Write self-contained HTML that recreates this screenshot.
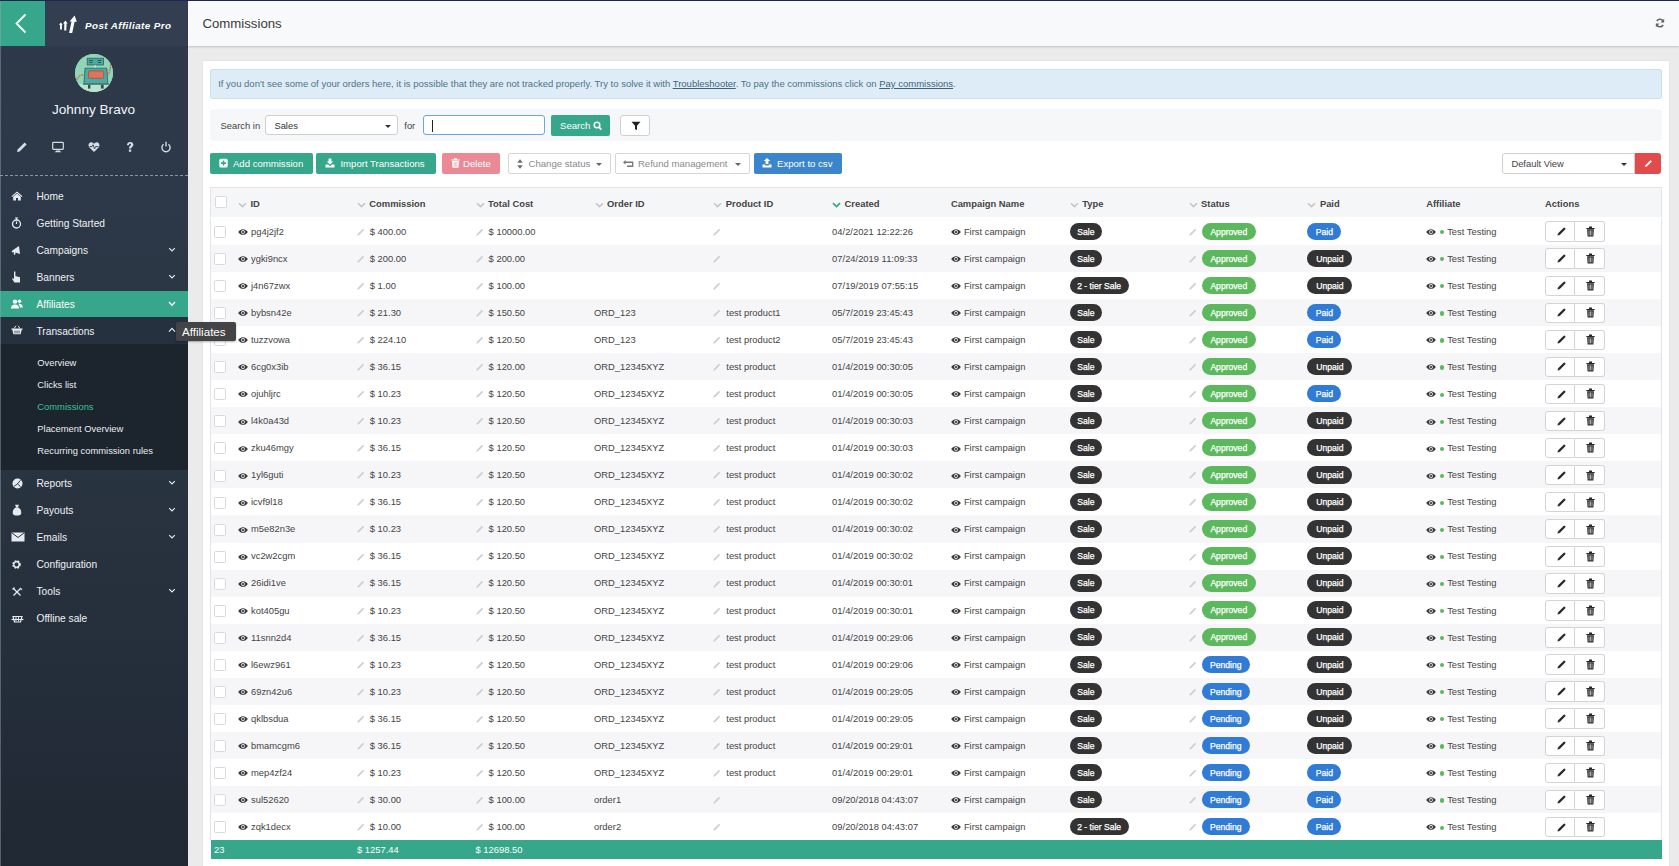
<!DOCTYPE html>
<html><head><meta charset="utf-8"><title>Commissions</title>
<style>
*{box-sizing:border-box}
html,body{margin:0;padding:0}
body{width:1679px;height:866px;overflow:hidden;position:relative;background:#ebebec;font-family:"Liberation Sans",sans-serif;color:#333}
.abs{position:absolute}
#topline{position:absolute;left:0;top:0;width:1679px;height:1px;background:#1f2452;z-index:5}
/* sidebar */
#side{position:absolute;left:0;top:1px;width:188px;height:865px;background:linear-gradient(180deg,#2e3a4b 0%,#2b3644 45%,#26303c 70%,#1f2833 100%);overflow:hidden}
#logo{position:absolute;left:0;top:0;width:188px;height:45px;background:#333f50}
#back{position:absolute;left:0;top:0;width:45px;height:45px;background:#36a78a}
#back svg{position:absolute;left:14px;top:12px}
#logotext{position:absolute;left:85px;top:19px;font-size:9.8px;letter-spacing:0.45px;font-weight:bold;font-style:italic;color:#fff;white-space:nowrap}
#avatar{position:absolute;left:75px;top:53px;width:38px;height:38px;border-radius:50%;background:#8ed6b6;overflow:hidden}
#uname{position:absolute;left:0;width:187px;top:100.7px;text-align:center;font-size:13.6px;color:#f1f4f7;white-space:nowrap}
.sico{position:absolute;top:139.5px}
#dash{position:absolute;left:0;top:174px;width:188px;height:0;border-top:1px dashed #8a94a0}
.nav{position:absolute;left:0;width:188px;height:27px;font-size:10.2px;color:#eef1f4;white-space:nowrap}
.nav .lbl{position:absolute;left:36.5px;top:7.5px}
.nav .ico{position:absolute;left:11px;top:8px}
.nav .car{position:absolute;left:168px;top:10px}
.nav.active{background:#36a78a;color:#fff}
.nav.open{background:#263140}
#sub{position:absolute;left:0;top:343px;width:188px;height:126px;background:#1c242e}
.si{position:absolute;left:37.3px;margin-top:-1px;font-size:9.4px;color:#e9edf1;white-space:nowrap}
.si.cur{color:#3fc09d}
#tip{position:absolute;left:176px;top:321.5px;width:60px;height:19.5px;background:#444446;border-radius:2px;color:#fff;font-size:11.6px;line-height:20px;padding-left:6px;white-space:nowrap;box-shadow:0 1px 2px rgba(0,0,0,.3);z-index:10}
/* header */
#hdr{position:absolute;left:188px;top:1px;width:1491px;height:45px;background:#f8f9fb;box-shadow:0 1px 2px rgba(0,0,0,.18)}
#title{position:absolute;left:14.5px;top:14.6px;font-size:13.2px;color:#3a3a3a;white-space:nowrap}
#refresh{position:absolute;left:1467px;top:16.6px}
/* panel */
#panel{position:absolute;left:203px;top:61px;width:1466px;height:820px;background:#fff;box-shadow:0 0 1px rgba(0,0,0,.12)}
#info{position:absolute;left:7px;top:8px;width:1452px;height:30px;background:#ddecf7;border:1px solid #c9e0ee;border-radius:2px;font-size:9.5px;color:#4d7388;white-space:nowrap;padding:7.8px 0 0 7.2px}
#info u{color:#3f6478}
#search{position:absolute;left:7px;top:48px;width:1452px;height:32px;background:#f6f7f9;border-radius:4px}
.lbl9{position:absolute;font-size:9.4px;color:#444;white-space:nowrap}
.sel{position:absolute;background:#fff;border:1px solid #cfcfcf;border-radius:3px}
.caret{position:absolute;width:0;height:0;border-left:3px solid transparent;border-right:3px solid transparent;border-top:3px solid #333}
.btn{position:absolute;height:21px;border-radius:2px;font-size:9.6px;white-space:nowrap;color:#fff}
.btn .tx{position:absolute;top:4.6px}
.btn.wb .tx{top:3.8px}
.btn svg{position:absolute}
.g{background:#36a78a}
.wb{background:#fff;border:1px solid #d6d6d6;color:#8a8a8a}
/* table */
#tbl{position:absolute;left:7px;top:126px;width:1452px;height:700px;border:1px solid #e4e4e6;border-bottom:none}
.thead{position:absolute;left:210px;top:187.4px;width:1452px;height:30px;background:#f5f6f8;border-top:1px solid #e4e4e6;border-left:1px solid #e4e4e6;border-right:1px solid #e4e4e6}
.cb{position:absolute;width:12px;height:12px;border:1px solid #d9d9d9;border-radius:1.5px;background:#fff}
.hchev{position:absolute;top:201.5px}.hchev svg{display:block}
.th{position:absolute;top:198px;font-size:9.4px;font-weight:bold;color:#444;white-space:nowrap}
.tr{position:absolute;left:210px;width:1452px;height:27.07px;background:#fff;border-left:1px solid #e4e4e6;border-right:1px solid #e4e4e6}
.tr.odd{background:#f6f6f8}
.td{position:absolute;top:0;height:27px;font-size:9.4px;color:#444;white-space:nowrap}
.td>span{position:absolute;top:7.9px;white-space:nowrap}
.td .t{left:13px}
.td .t2{left:21px}
.td .eye{position:absolute;left:-0.3px;top:11.3px}
.td .pen{position:absolute;left:0;top:10px}
.td .dot{position:absolute;left:13.4px;top:12.4px;width:4.2px;height:4.2px;border-radius:50%;background:#5cb85c}
.badge{position:absolute;top:4.8px!important;height:17.4px;line-height:18.6px;border-radius:9px;padding:0;text-align:center;color:#fff;font-size:8.6px;font-weight:normal;-webkit-text-stroke:0.25px #fff;overflow:hidden}
.badge.bs{left:13.2px}
.dark{background:#333}
.green{background:#5cb85c}
.blue{background:#2f7bd5}
.blue2{background:#2f7bd5}
.acts{position:absolute;top:3.6px;width:60.2px;height:20.4px}
.ab{position:absolute;top:0;width:30.1px;height:20.4px;border:1px solid #d4d4d4;background:#fff}
.ab:first-child{left:0;border-radius:3px 0 0 3px}
.ab:last-child{left:30px;border-radius:0 3px 3px 0;border-left:none}
.ab svg{position:absolute;left:10.3px;top:4.8px}
.ab:last-child svg{left:10.6px;top:3.6px}
#foot{position:absolute;left:210.5px;top:840px;width:1451px;height:19px;background:#36a78a;color:#fff;font-size:9.4px;white-space:nowrap}
#foot span{position:absolute;top:3.5px}
</style></head>
<body>
<div id="topline"></div>

<div id="side">
  <div id="logo"></div>
  <div id="back"><svg width="14" height="21" viewBox="0 0 14 21"><path d="M11.5 1.5L2.5 10.5L11.5 19.5" stroke="#fff" stroke-width="1.8" fill="none"/></svg></div>
  <svg class="abs" style="left:58px;top:13.2px" width="20" height="20" viewBox="0 0 20 20"><path d="M0.9 10.8L2.9 8.6L4.7 10.8H3.9V15.4H2V10.8Z M5.1 9.4L7.4 6.6L9.6 9.4H8.6L8.3 16.6H6.2L6.3 9.4Z M11.1 18.9L13.5 7.6H11.6L16.6 1.4L18.8 7.8H16.6L14.2 19.1Z" fill="#fff"/></svg>
  <div id="logotext">Post Affiliate Pro</div>
  <div id="avatar">
    <svg width="38" height="38" viewBox="0 0 38 38">
      <rect x="0" y="0" width="38" height="38" fill="#8fd5b6"/>
      <rect x="0" y="30" width="38" height="8" fill="#b9e3cf"/>
      <rect x="12.2" y="4.2" width="16.4" height="6.8" fill="#4aaaa4" stroke="#2f5050" stroke-width="0.7"/>
      <path d="M14 6.5H18M22.5 6.5H26.5M14.5 8.5H17.5M23 8.5H26" stroke="#2c4848" stroke-width="0.9"/>
      <rect x="19.6" y="11" width="1" height="3" fill="#eee"/>
      <path d="M10 14.2H31.8L32.8 29.8H8.9Z" fill="#4aaaa4" stroke="#2f5050" stroke-width="0.7"/>
      <rect x="13.5" y="16.9" width="15.2" height="7.4" rx="1" fill="#e47258" stroke="#8a3a2a" stroke-width="0.5"/>
      <rect x="8" y="29.4" width="26" height="1.4" fill="#3d7f7a"/>
      <rect x="13" y="30.8" width="2.4" height="3.8" fill="#4a4a42"/><rect x="25.9" y="30.8" width="2.8" height="3.8" fill="#4a4a42"/>
      <path d="M1.5 26.5Q4 20 9.5 21M32.5 21Q36 17 35.5 9" stroke="#c8643c" stroke-width="1.3" fill="none" stroke-dasharray="1.6 0.8"/>
    </svg>
  </div>
  <div id="uname">Johnny Bravo</div>
  <!-- user icons -->
  <svg class="sico" style="left:16px" width="12" height="12" viewBox="0 0 12 12"><path d="M1 11L1.6 8.4L8.6 1.4L10.6 3.4L3.6 10.4Z" fill="#d6dce3"/></svg>
  <svg class="sico" style="left:52px" width="12" height="12" viewBox="0 0 12 12"><rect x="0.7" y="1.3" width="10.6" height="7" rx="0.8" stroke="#d6dce3" stroke-width="1.2" fill="none"/><path d="M4 9.6H8V10.6H9.2V11.3H2.8V10.6H4Z" fill="#d6dce3"/></svg>
  <svg class="sico" style="left:88px" width="12" height="12" viewBox="0 0 12 12"><path d="M6 11L1.2 6.2C-0.2 4.6 0.6 1.3 3.2 1.3C4.6 1.3 5.4 2.2 6 3C6.6 2.2 7.4 1.3 8.8 1.3C11.4 1.3 12.2 4.6 10.8 6.2Z" fill="#d6dce3"/><path d="M1.5 5.6H4L5 3.8L6.6 7.8L7.6 5.6H10.5" stroke="#2e3a4a" stroke-width="0.9" fill="none"/></svg>
  <svg class="sico" style="left:124px" width="12" height="12" viewBox="0 0 12 12"><path d="M2.9 4.2C2.9 2.2 4.3 0.9 6.1 0.9C8.1 0.9 9.4 2 9.4 3.7C9.4 5.7 7.2 5.9 7.2 7.4H4.9C4.9 5.1 7 4.8 7 3.8C7 3.2 6.6 2.8 6 2.8C5.3 2.8 5 3.4 5 4.2Z M4.9 8.4H7.2V10.8H4.9Z" fill="#d6dce3"/></svg>
  <svg class="sico" style="left:160px" width="12" height="12" viewBox="0 0 12 12"><path d="M3.6 3.3A4.1 4.1 0 1 0 8.4 3.3" stroke="#d6dce3" stroke-width="1.4" fill="none"/><path d="M6 0.8V5.6" stroke="#d6dce3" stroke-width="1.4"/></svg>
  <div id="dash"></div>

  <!-- nav -->
  <div class="nav" style="top:182px"><svg class="ico" width="12" height="10" viewBox="0 0 12 10"><path d="M6 0.5L11.5 5.2L10.8 6L6 2L1.2 6L0.5 5.2Z M2.2 5.8L6 2.8L9.8 5.8V9.5H7V7H5V9.5H2.2Z" fill="#e6eaee"/></svg><span class="lbl">Home</span></div>
  <div class="nav" style="top:209px"><svg class="ico" width="11" height="12" viewBox="0 0 11 12" style="top:7px"><circle cx="5.5" cy="7" r="4" stroke="#e6eaee" stroke-width="1.3" fill="none"/><path d="M4 1H7M5.5 1V3M5.5 7V4.6" stroke="#e6eaee" stroke-width="1.2"/></svg><span class="lbl">Getting Started</span></div>
  <div class="nav" style="top:236px"><svg class="ico" width="12" height="11" viewBox="0 0 12 11"><path d="M0.5 6.5L2 5L8 1L9 9L4.5 7.6L4.2 9.8L2.7 9.5L2.8 7L1.5 7.5Z" fill="#e6eaee"/></svg><span class="lbl">Campaigns</span><svg class="car" width="8" height="6" viewBox="0 0 8 6"><path d="M1.2 1.2L4 4L6.8 1.2" stroke="#e6eaee" stroke-width="1.2" fill="none"/></svg></div>
  <div class="nav" style="top:263px"><svg class="ico" width="11" height="12" viewBox="0 0 11 12" style="top:7px"><path d="M3 0.5H4.4V5L9 6.2V11.5H3.4L1 7.8L2 7.2L3 8.2Z" fill="#e6eaee"/></svg><span class="lbl">Banners</span><svg class="car" width="8" height="6" viewBox="0 0 8 6"><path d="M1.2 1.2L4 4L6.8 1.2" stroke="#e6eaee" stroke-width="1.2" fill="none"/></svg></div>
  <div class="nav active" style="top:290px;height:26.5px"><svg class="ico" width="12" height="10" viewBox="0 0 12 10"><circle cx="4" cy="2.6" r="2.2" fill="#fff"/><path d="M0 9.5C0 6.8 1.6 5.5 4 5.5S8 6.8 8 9.5Z" fill="#fff"/><circle cx="8.5" cy="2.2" r="1.8" fill="#fff"/><path d="M8.3 4.8C10.3 4.8 11.8 6 11.8 8.5H8.8C8.8 7 8.4 5.8 7.4 5Z" fill="#fff"/></svg><span class="lbl">Affiliates</span><svg class="car" width="8" height="6" viewBox="0 0 8 6"><path d="M1 1L4 4.2L7 1" stroke="#fff" stroke-width="1.3" fill="none"/></svg></div>
  <div class="nav open" style="top:316px"><svg class="ico" width="12" height="10" viewBox="0 0 12 10"><path d="M0.5 3.5H11.5V4.7H0.5Z M1.3 4.7H10.7L9.6 9.3H2.4Z" fill="#e6eaee"/><path d="M3 3.5L5 0.8M9 3.5L7 0.8" stroke="#e6eaee" stroke-width="1"/><path d="M4 5.6V8.4M6 5.6V8.4M8 5.6V8.4" stroke="#263140" stroke-width="0.8"/></svg><span class="lbl" style="top:8.5px">Transactions</span><svg class="car" width="8" height="6" viewBox="0 0 8 6"><path d="M1 4.6L4 1.4L7 4.6" stroke="#e6eaee" stroke-width="1.2" fill="none"/></svg></div>
  <div id="sub">
    <div class="si" style="top:14px">Overview</div>
    <div class="si" style="top:36px">Clicks list</div>
    <div class="si cur" style="top:58px">Commissions</div>
    <div class="si" style="top:80px">Placement Overview</div>
    <div class="si" style="top:102px">Recurring commission rules</div>
  </div>
  <div class="nav" style="top:469.4px"><svg class="ico" width="12" height="12" viewBox="0 0 12 12" style="top:7.5px;left:12px"><circle cx="5.5" cy="5.5" r="5" fill="#e6eaee"/><path d="M5.5 6L8.5 2.2M5.5 6L2 8.2M5.5 6L8.6 8.6" stroke="#29343f" stroke-width="0.9"/></svg><span class="lbl">Reports</span><svg class="car" width="8" height="6" viewBox="0 0 8 6"><path d="M1.2 1.2L4 4L6.8 1.2" stroke="#e6eaee" stroke-width="1.2" fill="none"/></svg></div>
  <div class="nav" style="top:496.4px"><svg class="ico" width="12" height="12" viewBox="0 0 12 12" style="top:7px"><path d="M4 0.8H8L7 3H5Z M5 3.2H7C9.5 4.5 10.5 7 10.2 9.5C10 11 8.5 11.5 6 11.5S2 11 1.8 9.5C1.5 7 2.5 4.5 5 3.2Z" fill="#e6eaee"/></svg><span class="lbl">Payouts</span><svg class="car" width="8" height="6" viewBox="0 0 8 6"><path d="M1.2 1.2L4 4L6.8 1.2" stroke="#e6eaee" stroke-width="1.2" fill="none"/></svg></div>
  <div class="nav" style="top:523.4px"><svg class="ico" width="14" height="10" viewBox="0 0 14 10"><path d="M0.5 0.5H13.5V9.5H0.5Z" fill="#e6eaee"/><path d="M0.8 0.8L7 5.5L13.2 0.8" stroke="#26313c" stroke-width="1" fill="none"/></svg><span class="lbl">Emails</span><svg class="car" width="8" height="6" viewBox="0 0 8 6"><path d="M1.2 1.2L4 4L6.8 1.2" stroke="#e6eaee" stroke-width="1.2" fill="none"/></svg></div>
  <div class="nav" style="top:550.4px"><svg class="ico" width="11" height="11" viewBox="0 0 11 11" style="top:8px"><circle cx="5.5" cy="5.5" r="3.2" stroke="#e6eaee" stroke-width="2.2" fill="none" stroke-dasharray="1.6 1"/><circle cx="5.5" cy="5.5" r="2.8" stroke="#e6eaee" stroke-width="1.2" fill="none"/></svg><span class="lbl">Configuration</span></div>
  <div class="nav" style="top:577.4px"><svg class="ico" width="11" height="11" viewBox="0 0 11 11" style="top:8.5px;left:12px"><path d="M1.5 1.5L8.5 8.5M8.5 1.5L1.5 8.5" stroke="#e6eaee" stroke-width="1.3"/><path d="M0.5 2.5L2.5 0.5M8 0.8L10 2.8" stroke="#e6eaee" stroke-width="1.2"/></svg><span class="lbl">Tools</span><svg class="car" width="8" height="6" viewBox="0 0 8 6"><path d="M1.2 1.2L4 4L6.8 1.2" stroke="#e6eaee" stroke-width="1.2" fill="none"/></svg></div>
  <div class="nav" style="top:604.4px"><svg class="ico" width="13" height="11" viewBox="0 0 13 11" style="top:8.5px"><path d="M2 2.5L3.5 8H9.5L11 2.5Z" stroke="#e6eaee" stroke-width="1.2" fill="none"/><path d="M0.5 5.5H12.5" stroke="#e6eaee" stroke-width="1.1"/><path d="M5 3V7.5M7.5 3V7.5" stroke="#e6eaee" stroke-width="0.9"/></svg><span class="lbl">Offline sale</span></div>
</div>
<div class="abs" style="left:0;top:1px;width:1px;height:865px;background:rgba(150,165,180,0.45);z-index:6"></div>
<div id="tip">Affiliates</div>

<div id="hdr">
  <div id="title">Commissions</div>
  <svg id="refresh" width="10" height="10" viewBox="0 0 12 12"><path d="M10.2 4.6A4.4 4.4 0 0 0 2.2 3.6M1.8 7.4A4.4 4.4 0 0 0 9.8 8.4" stroke="#666" stroke-width="1.8" fill="none"/><path d="M11 1V5.4H6.6Z M1 11V6.6H5.4Z" fill="#666"/></svg>
</div>

<div id="panel">
  <div id="info">If you don't see some of your orders here, it is possible that they are not tracked properly. Try to solve it with <u>Troubleshooter</u>. To pay the commissions click on <u>Pay commissions</u>.</div>
  <div id="search"></div>
</div>

<!-- search controls (absolute page coords) -->
<div class="lbl9" style="left:220.5px;top:120px">Search in</div>
<div class="sel" style="left:265.4px;top:115.3px;width:132.2px;height:20px"><span class="lbl9" style="left:8px;top:3.3px;color:#333">Sales</span><div class="caret" style="left:119px;top:8.5px"></div></div>
<div class="lbl9" style="left:404.3px;top:120px">for</div>
<div class="sel" style="left:423px;top:115.3px;width:121.5px;height:20px;border-color:#6da6db"><div class="abs" style="left:8px;top:4px;width:1px;height:12px;background:#222"></div></div>
<div class="btn g" style="left:551px;top:115.3px;width:59px;height:20.5px"><span class="tx" style="left:9px">Search</span><svg style="left:42px;top:5.5px" width="9" height="10" viewBox="0 0 9 10"><circle cx="4" cy="4" r="2.8" stroke="#fff" stroke-width="1.5" fill="none"/><path d="M6 6.2L8.3 8.6" stroke="#fff" stroke-width="1.7"/></svg></div>
<div class="sel" style="left:620px;top:114.5px;width:30.4px;height:21px;border-color:#cfcfcf"><svg class="abs" style="left:10px;top:5.5px" width="10" height="10" viewBox="0 0 10 10"><path d="M0.5 0.8H9.5L6 4.8V9.2L4 8V4.8Z" fill="#222"/></svg></div>

<div class="btn g" style="left:210px;top:153.1px;width:102.9px;height:20.8px"><svg style="left:9px;top:5px" width="9" height="10" viewBox="0 0 9 10"><rect x="0.3" y="0.8" width="8.4" height="8.6" rx="1.5" fill="#fff"/><path d="M4.5 2.6V7.6M2 5.1H7" stroke="#36a78a" stroke-width="1.6"/></svg><span class="tx" style="left:22.9px">Add commission</span></div>
<div class="btn g" style="left:316px;top:153.1px;width:119.7px;height:20.8px"><svg style="left:9px;top:4.5px" width="10" height="10" viewBox="0 0 10 10"><path d="M3.6 0.5H6.4V3.5H8.3L5 6.5L1.7 3.5H3.6Z" fill="#fff"/><path d="M0.5 6.5H3.2L5 8.2L6.8 6.5H9.5V9.6H0.5Z" fill="#fff"/></svg><span class="tx" style="left:24.4px">Import Transactions</span></div>
<div class="btn" style="left:442px;top:153.1px;width:57.6px;height:20.8px;background:#eb8994"><svg style="left:8.5px;top:5px" width="9" height="10" viewBox="0 0 9 10"><path d="M0.3 1.4H8.7V2.6H0.3Z M3 0.3H6V1.4H3Z M1 2.9H8L7.5 9.7H1.5Z" fill="#fff"/><path d="M3.2 4V8.6M4.5 4V8.6M5.8 4V8.6" stroke="#eb8994" stroke-width="0.5"/></svg><span class="tx" style="left:21px">Delete</span></div>
<div class="btn wb" style="left:508px;top:153.1px;width:102.5px;height:20.8px"><svg style="left:8px;top:4.5px" width="6" height="10" viewBox="0 0 6 10"><path d="M3 0.3L5.8 3.8H0.2Z M3 9.7L5.8 6.2H0.2Z" fill="#6a6a6a"/></svg><span class="tx" style="left:19.5px">Change status</span><div class="caret" style="left:87px;top:8.5px;border-top-color:#666"></div></div>
<div class="btn wb" style="left:615.2px;top:153.1px;width:134.4px;height:20.8px"><svg style="left:7px;top:6px" width="11" height="8" viewBox="0 0 11 8"><path d="M9.5 1.5H2.5V0L0 2.2L2.5 4.4V2.9H9V5.6H4V7H10.3V1.5Z" fill="#777"/></svg><span class="tx" style="left:21.7px">Refund management</span><div class="caret" style="left:119px;top:8.5px;border-top-color:#666"></div></div>
<div class="btn" style="left:754px;top:153.1px;width:87.8px;height:20.8px;background:#3a85cb"><svg style="left:8px;top:4.5px" width="10" height="10" viewBox="0 0 10 10"><path d="M3.6 6H6.4V3H8.3L5 0L1.7 3H3.6Z" fill="#fff"/><path d="M0.5 6.5H3.2V7.4H6.8V6.5H9.5V9.6H0.5Z" fill="#fff"/></svg><span class="tx" style="left:23px">Export to csv</span></div>

<div class="sel" style="left:1502.4px;top:153.2px;width:133px;height:20.6px;border-radius:3px 0 0 3px"><span class="lbl9" style="left:8px;top:4.2px;color:#444">Default View</span><div class="caret" style="left:118px;top:8.5px"></div></div>
<div class="btn" style="left:1635px;top:153.2px;width:25.7px;height:20.6px;background:#e24b4b;border-radius:0 3px 3px 0"><svg style="left:8.5px;top:5.5px" width="9" height="9" viewBox="0 0 9 9"><path d="M1 8L1.4 6.3L6.6 1.1L7.9 2.4L2.7 7.6Z" fill="#fff"/></svg></div>

<div class="thead"></div>
<div class="cb" style="left:215px;top:196px"></div>
<div class="hchev" style="left:238.0px"><svg class="chev" width="9" height="6" viewBox="0 0 9 6"><path d="M1 1.2L4.5 4.6L8 1.2" stroke="#c4c4c4" stroke-width="1.5" fill="none"/></svg></div>
<div class="th" style="left:250.5px">ID</div>
<div class="hchev" style="left:356.8px"><svg class="chev" width="9" height="6" viewBox="0 0 9 6"><path d="M1 1.2L4.5 4.6L8 1.2" stroke="#c4c4c4" stroke-width="1.5" fill="none"/></svg></div>
<div class="th" style="left:369.3px">Commission</div>
<div class="hchev" style="left:475.6px"><svg class="chev" width="9" height="6" viewBox="0 0 9 6"><path d="M1 1.2L4.5 4.6L8 1.2" stroke="#c4c4c4" stroke-width="1.5" fill="none"/></svg></div>
<div class="th" style="left:488.1px">Total Cost</div>
<div class="hchev" style="left:594.5px"><svg class="chev" width="9" height="6" viewBox="0 0 9 6"><path d="M1 1.2L4.5 4.6L8 1.2" stroke="#c4c4c4" stroke-width="1.5" fill="none"/></svg></div>
<div class="th" style="left:607.0px">Order ID</div>
<div class="hchev" style="left:713.3px"><svg class="chev" width="9" height="6" viewBox="0 0 9 6"><path d="M1 1.2L4.5 4.6L8 1.2" stroke="#c4c4c4" stroke-width="1.5" fill="none"/></svg></div>
<div class="th" style="left:725.8px">Product ID</div>
<div class="hchev" style="left:832.1px"><svg class="chev" width="9" height="6" viewBox="0 0 9 6"><path d="M1 1.2L4.5 4.6L8 1.2" stroke="#36a78a" stroke-width="1.8" fill="none"/></svg></div>
<div class="th" style="left:844.6px">Created</div>
<div class="th" style="left:950.9px">Campaign Name</div>
<div class="hchev" style="left:1069.7px"><svg class="chev" width="9" height="6" viewBox="0 0 9 6"><path d="M1 1.2L4.5 4.6L8 1.2" stroke="#c4c4c4" stroke-width="1.5" fill="none"/></svg></div>
<div class="th" style="left:1082.2px">Type</div>
<div class="hchev" style="left:1188.6px"><svg class="chev" width="9" height="6" viewBox="0 0 9 6"><path d="M1 1.2L4.5 4.6L8 1.2" stroke="#c4c4c4" stroke-width="1.5" fill="none"/></svg></div>
<div class="th" style="left:1201.1px">Status</div>
<div class="hchev" style="left:1307.4px"><svg class="chev" width="9" height="6" viewBox="0 0 9 6"><path d="M1 1.2L4.5 4.6L8 1.2" stroke="#c4c4c4" stroke-width="1.5" fill="none"/></svg></div>
<div class="th" style="left:1319.9px">Paid</div>
<div class="th" style="left:1426.2px">Affiliate</div>
<div class="th" style="left:1545.0px">Actions</div>
<div class="tr" style="top:217.80px;height:27.06px">
<div class="cb" style="left:3px;top:8.2px"></div>
<div class="td" style="left:27.0px"><svg class="eye" width="10" height="6" viewBox="0 0 10 6"><path d="M0.2 3C1.5 1 3.1 0.2 5 0.2S8.5 1 9.8 3C8.5 5 6.9 5.8 5 5.8S1.5 5 0.2 3Z" fill="#3a3a3a"/><circle cx="5" cy="3" r="1.9" fill="#f0f0f0"/><circle cx="5" cy="3.1" r="1.1" fill="#3a3a3a"/></svg><span class="t">pg4j2jf2</span></div>
<div class="td" style="left:145.8px"><svg class="pen" width="8" height="8" viewBox="0 0 8 8"><path d="M0.3 7.7L0.7 6L5.9 0.8L7.2 2.1L2 7.3Z" fill="#cfcfcf"/></svg><span class="t">$ 400.00</span></div>
<div class="td" style="left:264.6px"><svg class="pen" width="8" height="8" viewBox="0 0 8 8"><path d="M0.3 7.7L0.7 6L5.9 0.8L7.2 2.1L2 7.3Z" fill="#cfcfcf"/></svg><span class="t">$ 10000.00</span></div>
<div class="td" style="left:383.0px"><span></span></div>
<div class="td" style="left:502.3px"><svg class="pen" width="8" height="8" viewBox="0 0 8 8"><path d="M0.3 7.7L0.7 6L5.9 0.8L7.2 2.1L2 7.3Z" fill="#cfcfcf"/></svg></div>
<div class="td" style="left:621.1px"><span>04/2/2021 12:22:26</span></div>
<div class="td" style="left:739.9px"><svg class="eye" width="10" height="6" viewBox="0 0 10 6"><path d="M0.2 3C1.5 1 3.1 0.2 5 0.2S8.5 1 9.8 3C8.5 5 6.9 5.8 5 5.8S1.5 5 0.2 3Z" fill="#3a3a3a"/><circle cx="5" cy="3" r="1.9" fill="#f0f0f0"/><circle cx="5" cy="3.1" r="1.1" fill="#3a3a3a"/></svg><span class="t">First campaign</span></div>
<div class="td" style="left:858.7px"><span class="badge dark" style="width:32.3px">Sale</span></div>
<div class="td" style="left:977.6px"><svg class="pen" width="8" height="8" viewBox="0 0 8 8"><path d="M0.3 7.7L0.7 6L5.9 0.8L7.2 2.1L2 7.3Z" fill="#cfcfcf"/></svg><span class="badge green bs" style="width:54px">Approved</span></div>
<div class="td" style="left:1096.4px"><span class="badge blue" style="width:34px">Paid</span></div>
<div class="td" style="left:1215.2px"><svg class="eye" width="10" height="6" viewBox="0 0 10 6"><path d="M0.2 3C1.5 1 3.1 0.2 5 0.2S8.5 1 9.8 3C8.5 5 6.9 5.8 5 5.8S1.5 5 0.2 3Z" fill="#3a3a3a"/><circle cx="5" cy="3" r="1.9" fill="#f0f0f0"/><circle cx="5" cy="3.1" r="1.1" fill="#3a3a3a"/></svg><span class="dot"></span><span class="t2">Test Testing</span></div>
<div class="acts" style="left:1334.4px"><div class="ab"><svg width="9" height="9" viewBox="0 0 9 9"><path d="M2.4 6.6L7.3 1.7" stroke="#2a2a2a" stroke-width="2.3" stroke-linecap="round"/><path d="M0.5 8.5L1 6L3 8Z" fill="#2a2a2a"/></svg></div><div class="ab"><svg width="9" height="11" viewBox="0 0 9 11"><path d="M0.3 2H8.7V3.1H0.3Z M3 0.6H6V2H3Z M1.1 3.3H7.9L7.4 10.6H1.6Z" fill="#2a2a2a"/><path d="M3 4.4V9.4M4.5 4.4V9.4M6 4.4V9.4" stroke="#fff" stroke-width="0.6"/></svg></div></div>
</div>
<div class="tr odd" style="top:244.86px;height:27.06px">
<div class="cb" style="left:3px;top:8.2px"></div>
<div class="td" style="left:27.0px"><svg class="eye" width="10" height="6" viewBox="0 0 10 6"><path d="M0.2 3C1.5 1 3.1 0.2 5 0.2S8.5 1 9.8 3C8.5 5 6.9 5.8 5 5.8S1.5 5 0.2 3Z" fill="#3a3a3a"/><circle cx="5" cy="3" r="1.9" fill="#f0f0f0"/><circle cx="5" cy="3.1" r="1.1" fill="#3a3a3a"/></svg><span class="t">ygki9ncx</span></div>
<div class="td" style="left:145.8px"><svg class="pen" width="8" height="8" viewBox="0 0 8 8"><path d="M0.3 7.7L0.7 6L5.9 0.8L7.2 2.1L2 7.3Z" fill="#cfcfcf"/></svg><span class="t">$ 200.00</span></div>
<div class="td" style="left:264.6px"><svg class="pen" width="8" height="8" viewBox="0 0 8 8"><path d="M0.3 7.7L0.7 6L5.9 0.8L7.2 2.1L2 7.3Z" fill="#cfcfcf"/></svg><span class="t">$ 200.00</span></div>
<div class="td" style="left:383.0px"><span></span></div>
<div class="td" style="left:502.3px"><svg class="pen" width="8" height="8" viewBox="0 0 8 8"><path d="M0.3 7.7L0.7 6L5.9 0.8L7.2 2.1L2 7.3Z" fill="#cfcfcf"/></svg></div>
<div class="td" style="left:621.1px"><span>07/24/2019 11:09:33</span></div>
<div class="td" style="left:739.9px"><svg class="eye" width="10" height="6" viewBox="0 0 10 6"><path d="M0.2 3C1.5 1 3.1 0.2 5 0.2S8.5 1 9.8 3C8.5 5 6.9 5.8 5 5.8S1.5 5 0.2 3Z" fill="#3a3a3a"/><circle cx="5" cy="3" r="1.9" fill="#f0f0f0"/><circle cx="5" cy="3.1" r="1.1" fill="#3a3a3a"/></svg><span class="t">First campaign</span></div>
<div class="td" style="left:858.7px"><span class="badge dark" style="width:32.3px">Sale</span></div>
<div class="td" style="left:977.6px"><svg class="pen" width="8" height="8" viewBox="0 0 8 8"><path d="M0.3 7.7L0.7 6L5.9 0.8L7.2 2.1L2 7.3Z" fill="#cfcfcf"/></svg><span class="badge green bs" style="width:54px">Approved</span></div>
<div class="td" style="left:1096.4px"><span class="badge dark" style="width:45px">Unpaid</span></div>
<div class="td" style="left:1215.2px"><svg class="eye" width="10" height="6" viewBox="0 0 10 6"><path d="M0.2 3C1.5 1 3.1 0.2 5 0.2S8.5 1 9.8 3C8.5 5 6.9 5.8 5 5.8S1.5 5 0.2 3Z" fill="#3a3a3a"/><circle cx="5" cy="3" r="1.9" fill="#f0f0f0"/><circle cx="5" cy="3.1" r="1.1" fill="#3a3a3a"/></svg><span class="dot"></span><span class="t2">Test Testing</span></div>
<div class="acts" style="left:1334.4px"><div class="ab"><svg width="9" height="9" viewBox="0 0 9 9"><path d="M2.4 6.6L7.3 1.7" stroke="#2a2a2a" stroke-width="2.3" stroke-linecap="round"/><path d="M0.5 8.5L1 6L3 8Z" fill="#2a2a2a"/></svg></div><div class="ab"><svg width="9" height="11" viewBox="0 0 9 11"><path d="M0.3 2H8.7V3.1H0.3Z M3 0.6H6V2H3Z M1.1 3.3H7.9L7.4 10.6H1.6Z" fill="#2a2a2a"/><path d="M3 4.4V9.4M4.5 4.4V9.4M6 4.4V9.4" stroke="#fff" stroke-width="0.6"/></svg></div></div>
</div>
<div class="tr" style="top:271.92px;height:27.06px">
<div class="cb" style="left:3px;top:8.2px"></div>
<div class="td" style="left:27.0px"><svg class="eye" width="10" height="6" viewBox="0 0 10 6"><path d="M0.2 3C1.5 1 3.1 0.2 5 0.2S8.5 1 9.8 3C8.5 5 6.9 5.8 5 5.8S1.5 5 0.2 3Z" fill="#3a3a3a"/><circle cx="5" cy="3" r="1.9" fill="#f0f0f0"/><circle cx="5" cy="3.1" r="1.1" fill="#3a3a3a"/></svg><span class="t">j4n67zwx</span></div>
<div class="td" style="left:145.8px"><svg class="pen" width="8" height="8" viewBox="0 0 8 8"><path d="M0.3 7.7L0.7 6L5.9 0.8L7.2 2.1L2 7.3Z" fill="#cfcfcf"/></svg><span class="t">$ 1.00</span></div>
<div class="td" style="left:264.6px"><svg class="pen" width="8" height="8" viewBox="0 0 8 8"><path d="M0.3 7.7L0.7 6L5.9 0.8L7.2 2.1L2 7.3Z" fill="#cfcfcf"/></svg><span class="t">$ 100.00</span></div>
<div class="td" style="left:383.0px"><span></span></div>
<div class="td" style="left:502.3px"><svg class="pen" width="8" height="8" viewBox="0 0 8 8"><path d="M0.3 7.7L0.7 6L5.9 0.8L7.2 2.1L2 7.3Z" fill="#cfcfcf"/></svg></div>
<div class="td" style="left:621.1px"><span>07/19/2019 07:55:15</span></div>
<div class="td" style="left:739.9px"><svg class="eye" width="10" height="6" viewBox="0 0 10 6"><path d="M0.2 3C1.5 1 3.1 0.2 5 0.2S8.5 1 9.8 3C8.5 5 6.9 5.8 5 5.8S1.5 5 0.2 3Z" fill="#3a3a3a"/><circle cx="5" cy="3" r="1.9" fill="#f0f0f0"/><circle cx="5" cy="3.1" r="1.1" fill="#3a3a3a"/></svg><span class="t">First campaign</span></div>
<div class="td" style="left:858.7px"><span class="badge dark" style="width:59px">2 - tier Sale</span></div>
<div class="td" style="left:977.6px"><svg class="pen" width="8" height="8" viewBox="0 0 8 8"><path d="M0.3 7.7L0.7 6L5.9 0.8L7.2 2.1L2 7.3Z" fill="#cfcfcf"/></svg><span class="badge green bs" style="width:54px">Approved</span></div>
<div class="td" style="left:1096.4px"><span class="badge dark" style="width:45px">Unpaid</span></div>
<div class="td" style="left:1215.2px"><svg class="eye" width="10" height="6" viewBox="0 0 10 6"><path d="M0.2 3C1.5 1 3.1 0.2 5 0.2S8.5 1 9.8 3C8.5 5 6.9 5.8 5 5.8S1.5 5 0.2 3Z" fill="#3a3a3a"/><circle cx="5" cy="3" r="1.9" fill="#f0f0f0"/><circle cx="5" cy="3.1" r="1.1" fill="#3a3a3a"/></svg><span class="dot"></span><span class="t2">Test Testing</span></div>
<div class="acts" style="left:1334.4px"><div class="ab"><svg width="9" height="9" viewBox="0 0 9 9"><path d="M2.4 6.6L7.3 1.7" stroke="#2a2a2a" stroke-width="2.3" stroke-linecap="round"/><path d="M0.5 8.5L1 6L3 8Z" fill="#2a2a2a"/></svg></div><div class="ab"><svg width="9" height="11" viewBox="0 0 9 11"><path d="M0.3 2H8.7V3.1H0.3Z M3 0.6H6V2H3Z M1.1 3.3H7.9L7.4 10.6H1.6Z" fill="#2a2a2a"/><path d="M3 4.4V9.4M4.5 4.4V9.4M6 4.4V9.4" stroke="#fff" stroke-width="0.6"/></svg></div></div>
</div>
<div class="tr odd" style="top:298.98px;height:27.06px">
<div class="cb" style="left:3px;top:8.2px"></div>
<div class="td" style="left:27.0px"><svg class="eye" width="10" height="6" viewBox="0 0 10 6"><path d="M0.2 3C1.5 1 3.1 0.2 5 0.2S8.5 1 9.8 3C8.5 5 6.9 5.8 5 5.8S1.5 5 0.2 3Z" fill="#3a3a3a"/><circle cx="5" cy="3" r="1.9" fill="#f0f0f0"/><circle cx="5" cy="3.1" r="1.1" fill="#3a3a3a"/></svg><span class="t">bybsn42e</span></div>
<div class="td" style="left:145.8px"><svg class="pen" width="8" height="8" viewBox="0 0 8 8"><path d="M0.3 7.7L0.7 6L5.9 0.8L7.2 2.1L2 7.3Z" fill="#cfcfcf"/></svg><span class="t">$ 21.30</span></div>
<div class="td" style="left:264.6px"><svg class="pen" width="8" height="8" viewBox="0 0 8 8"><path d="M0.3 7.7L0.7 6L5.9 0.8L7.2 2.1L2 7.3Z" fill="#cfcfcf"/></svg><span class="t">$ 150.50</span></div>
<div class="td" style="left:383.0px"><span>ORD_123</span></div>
<div class="td" style="left:502.3px"><svg class="pen" width="8" height="8" viewBox="0 0 8 8"><path d="M0.3 7.7L0.7 6L5.9 0.8L7.2 2.1L2 7.3Z" fill="#cfcfcf"/></svg><span class="t">test product1</span></div>
<div class="td" style="left:621.1px"><span>05/7/2019 23:45:43</span></div>
<div class="td" style="left:739.9px"><svg class="eye" width="10" height="6" viewBox="0 0 10 6"><path d="M0.2 3C1.5 1 3.1 0.2 5 0.2S8.5 1 9.8 3C8.5 5 6.9 5.8 5 5.8S1.5 5 0.2 3Z" fill="#3a3a3a"/><circle cx="5" cy="3" r="1.9" fill="#f0f0f0"/><circle cx="5" cy="3.1" r="1.1" fill="#3a3a3a"/></svg><span class="t">First campaign</span></div>
<div class="td" style="left:858.7px"><span class="badge dark" style="width:32.3px">Sale</span></div>
<div class="td" style="left:977.6px"><svg class="pen" width="8" height="8" viewBox="0 0 8 8"><path d="M0.3 7.7L0.7 6L5.9 0.8L7.2 2.1L2 7.3Z" fill="#cfcfcf"/></svg><span class="badge green bs" style="width:54px">Approved</span></div>
<div class="td" style="left:1096.4px"><span class="badge blue" style="width:34px">Paid</span></div>
<div class="td" style="left:1215.2px"><svg class="eye" width="10" height="6" viewBox="0 0 10 6"><path d="M0.2 3C1.5 1 3.1 0.2 5 0.2S8.5 1 9.8 3C8.5 5 6.9 5.8 5 5.8S1.5 5 0.2 3Z" fill="#3a3a3a"/><circle cx="5" cy="3" r="1.9" fill="#f0f0f0"/><circle cx="5" cy="3.1" r="1.1" fill="#3a3a3a"/></svg><span class="dot"></span><span class="t2">Test Testing</span></div>
<div class="acts" style="left:1334.4px"><div class="ab"><svg width="9" height="9" viewBox="0 0 9 9"><path d="M2.4 6.6L7.3 1.7" stroke="#2a2a2a" stroke-width="2.3" stroke-linecap="round"/><path d="M0.5 8.5L1 6L3 8Z" fill="#2a2a2a"/></svg></div><div class="ab"><svg width="9" height="11" viewBox="0 0 9 11"><path d="M0.3 2H8.7V3.1H0.3Z M3 0.6H6V2H3Z M1.1 3.3H7.9L7.4 10.6H1.6Z" fill="#2a2a2a"/><path d="M3 4.4V9.4M4.5 4.4V9.4M6 4.4V9.4" stroke="#fff" stroke-width="0.6"/></svg></div></div>
</div>
<div class="tr" style="top:326.04px;height:27.06px">
<div class="cb" style="left:3px;top:8.2px"></div>
<div class="td" style="left:27.0px"><svg class="eye" width="10" height="6" viewBox="0 0 10 6"><path d="M0.2 3C1.5 1 3.1 0.2 5 0.2S8.5 1 9.8 3C8.5 5 6.9 5.8 5 5.8S1.5 5 0.2 3Z" fill="#3a3a3a"/><circle cx="5" cy="3" r="1.9" fill="#f0f0f0"/><circle cx="5" cy="3.1" r="1.1" fill="#3a3a3a"/></svg><span class="t">tuzzvowa</span></div>
<div class="td" style="left:145.8px"><svg class="pen" width="8" height="8" viewBox="0 0 8 8"><path d="M0.3 7.7L0.7 6L5.9 0.8L7.2 2.1L2 7.3Z" fill="#cfcfcf"/></svg><span class="t">$ 224.10</span></div>
<div class="td" style="left:264.6px"><svg class="pen" width="8" height="8" viewBox="0 0 8 8"><path d="M0.3 7.7L0.7 6L5.9 0.8L7.2 2.1L2 7.3Z" fill="#cfcfcf"/></svg><span class="t">$ 120.50</span></div>
<div class="td" style="left:383.0px"><span>ORD_123</span></div>
<div class="td" style="left:502.3px"><svg class="pen" width="8" height="8" viewBox="0 0 8 8"><path d="M0.3 7.7L0.7 6L5.9 0.8L7.2 2.1L2 7.3Z" fill="#cfcfcf"/></svg><span class="t">test product2</span></div>
<div class="td" style="left:621.1px"><span>05/7/2019 23:45:43</span></div>
<div class="td" style="left:739.9px"><svg class="eye" width="10" height="6" viewBox="0 0 10 6"><path d="M0.2 3C1.5 1 3.1 0.2 5 0.2S8.5 1 9.8 3C8.5 5 6.9 5.8 5 5.8S1.5 5 0.2 3Z" fill="#3a3a3a"/><circle cx="5" cy="3" r="1.9" fill="#f0f0f0"/><circle cx="5" cy="3.1" r="1.1" fill="#3a3a3a"/></svg><span class="t">First campaign</span></div>
<div class="td" style="left:858.7px"><span class="badge dark" style="width:32.3px">Sale</span></div>
<div class="td" style="left:977.6px"><svg class="pen" width="8" height="8" viewBox="0 0 8 8"><path d="M0.3 7.7L0.7 6L5.9 0.8L7.2 2.1L2 7.3Z" fill="#cfcfcf"/></svg><span class="badge green bs" style="width:54px">Approved</span></div>
<div class="td" style="left:1096.4px"><span class="badge blue" style="width:34px">Paid</span></div>
<div class="td" style="left:1215.2px"><svg class="eye" width="10" height="6" viewBox="0 0 10 6"><path d="M0.2 3C1.5 1 3.1 0.2 5 0.2S8.5 1 9.8 3C8.5 5 6.9 5.8 5 5.8S1.5 5 0.2 3Z" fill="#3a3a3a"/><circle cx="5" cy="3" r="1.9" fill="#f0f0f0"/><circle cx="5" cy="3.1" r="1.1" fill="#3a3a3a"/></svg><span class="dot"></span><span class="t2">Test Testing</span></div>
<div class="acts" style="left:1334.4px"><div class="ab"><svg width="9" height="9" viewBox="0 0 9 9"><path d="M2.4 6.6L7.3 1.7" stroke="#2a2a2a" stroke-width="2.3" stroke-linecap="round"/><path d="M0.5 8.5L1 6L3 8Z" fill="#2a2a2a"/></svg></div><div class="ab"><svg width="9" height="11" viewBox="0 0 9 11"><path d="M0.3 2H8.7V3.1H0.3Z M3 0.6H6V2H3Z M1.1 3.3H7.9L7.4 10.6H1.6Z" fill="#2a2a2a"/><path d="M3 4.4V9.4M4.5 4.4V9.4M6 4.4V9.4" stroke="#fff" stroke-width="0.6"/></svg></div></div>
</div>
<div class="tr odd" style="top:353.10px;height:27.06px">
<div class="cb" style="left:3px;top:8.2px"></div>
<div class="td" style="left:27.0px"><svg class="eye" width="10" height="6" viewBox="0 0 10 6"><path d="M0.2 3C1.5 1 3.1 0.2 5 0.2S8.5 1 9.8 3C8.5 5 6.9 5.8 5 5.8S1.5 5 0.2 3Z" fill="#3a3a3a"/><circle cx="5" cy="3" r="1.9" fill="#f0f0f0"/><circle cx="5" cy="3.1" r="1.1" fill="#3a3a3a"/></svg><span class="t">6cg0x3ib</span></div>
<div class="td" style="left:145.8px"><svg class="pen" width="8" height="8" viewBox="0 0 8 8"><path d="M0.3 7.7L0.7 6L5.9 0.8L7.2 2.1L2 7.3Z" fill="#cfcfcf"/></svg><span class="t">$ 36.15</span></div>
<div class="td" style="left:264.6px"><svg class="pen" width="8" height="8" viewBox="0 0 8 8"><path d="M0.3 7.7L0.7 6L5.9 0.8L7.2 2.1L2 7.3Z" fill="#cfcfcf"/></svg><span class="t">$ 120.00</span></div>
<div class="td" style="left:383.0px"><span>ORD_12345XYZ</span></div>
<div class="td" style="left:502.3px"><svg class="pen" width="8" height="8" viewBox="0 0 8 8"><path d="M0.3 7.7L0.7 6L5.9 0.8L7.2 2.1L2 7.3Z" fill="#cfcfcf"/></svg><span class="t">test product</span></div>
<div class="td" style="left:621.1px"><span>01/4/2019 00:30:05</span></div>
<div class="td" style="left:739.9px"><svg class="eye" width="10" height="6" viewBox="0 0 10 6"><path d="M0.2 3C1.5 1 3.1 0.2 5 0.2S8.5 1 9.8 3C8.5 5 6.9 5.8 5 5.8S1.5 5 0.2 3Z" fill="#3a3a3a"/><circle cx="5" cy="3" r="1.9" fill="#f0f0f0"/><circle cx="5" cy="3.1" r="1.1" fill="#3a3a3a"/></svg><span class="t">First campaign</span></div>
<div class="td" style="left:858.7px"><span class="badge dark" style="width:32.3px">Sale</span></div>
<div class="td" style="left:977.6px"><svg class="pen" width="8" height="8" viewBox="0 0 8 8"><path d="M0.3 7.7L0.7 6L5.9 0.8L7.2 2.1L2 7.3Z" fill="#cfcfcf"/></svg><span class="badge green bs" style="width:54px">Approved</span></div>
<div class="td" style="left:1096.4px"><span class="badge dark" style="width:45px">Unpaid</span></div>
<div class="td" style="left:1215.2px"><svg class="eye" width="10" height="6" viewBox="0 0 10 6"><path d="M0.2 3C1.5 1 3.1 0.2 5 0.2S8.5 1 9.8 3C8.5 5 6.9 5.8 5 5.8S1.5 5 0.2 3Z" fill="#3a3a3a"/><circle cx="5" cy="3" r="1.9" fill="#f0f0f0"/><circle cx="5" cy="3.1" r="1.1" fill="#3a3a3a"/></svg><span class="dot"></span><span class="t2">Test Testing</span></div>
<div class="acts" style="left:1334.4px"><div class="ab"><svg width="9" height="9" viewBox="0 0 9 9"><path d="M2.4 6.6L7.3 1.7" stroke="#2a2a2a" stroke-width="2.3" stroke-linecap="round"/><path d="M0.5 8.5L1 6L3 8Z" fill="#2a2a2a"/></svg></div><div class="ab"><svg width="9" height="11" viewBox="0 0 9 11"><path d="M0.3 2H8.7V3.1H0.3Z M3 0.6H6V2H3Z M1.1 3.3H7.9L7.4 10.6H1.6Z" fill="#2a2a2a"/><path d="M3 4.4V9.4M4.5 4.4V9.4M6 4.4V9.4" stroke="#fff" stroke-width="0.6"/></svg></div></div>
</div>
<div class="tr" style="top:380.16px;height:27.06px">
<div class="cb" style="left:3px;top:8.2px"></div>
<div class="td" style="left:27.0px"><svg class="eye" width="10" height="6" viewBox="0 0 10 6"><path d="M0.2 3C1.5 1 3.1 0.2 5 0.2S8.5 1 9.8 3C8.5 5 6.9 5.8 5 5.8S1.5 5 0.2 3Z" fill="#3a3a3a"/><circle cx="5" cy="3" r="1.9" fill="#f0f0f0"/><circle cx="5" cy="3.1" r="1.1" fill="#3a3a3a"/></svg><span class="t">ojuhljrc</span></div>
<div class="td" style="left:145.8px"><svg class="pen" width="8" height="8" viewBox="0 0 8 8"><path d="M0.3 7.7L0.7 6L5.9 0.8L7.2 2.1L2 7.3Z" fill="#cfcfcf"/></svg><span class="t">$ 10.23</span></div>
<div class="td" style="left:264.6px"><svg class="pen" width="8" height="8" viewBox="0 0 8 8"><path d="M0.3 7.7L0.7 6L5.9 0.8L7.2 2.1L2 7.3Z" fill="#cfcfcf"/></svg><span class="t">$ 120.50</span></div>
<div class="td" style="left:383.0px"><span>ORD_12345XYZ</span></div>
<div class="td" style="left:502.3px"><svg class="pen" width="8" height="8" viewBox="0 0 8 8"><path d="M0.3 7.7L0.7 6L5.9 0.8L7.2 2.1L2 7.3Z" fill="#cfcfcf"/></svg><span class="t">test product</span></div>
<div class="td" style="left:621.1px"><span>01/4/2019 00:30:05</span></div>
<div class="td" style="left:739.9px"><svg class="eye" width="10" height="6" viewBox="0 0 10 6"><path d="M0.2 3C1.5 1 3.1 0.2 5 0.2S8.5 1 9.8 3C8.5 5 6.9 5.8 5 5.8S1.5 5 0.2 3Z" fill="#3a3a3a"/><circle cx="5" cy="3" r="1.9" fill="#f0f0f0"/><circle cx="5" cy="3.1" r="1.1" fill="#3a3a3a"/></svg><span class="t">First campaign</span></div>
<div class="td" style="left:858.7px"><span class="badge dark" style="width:32.3px">Sale</span></div>
<div class="td" style="left:977.6px"><svg class="pen" width="8" height="8" viewBox="0 0 8 8"><path d="M0.3 7.7L0.7 6L5.9 0.8L7.2 2.1L2 7.3Z" fill="#cfcfcf"/></svg><span class="badge green bs" style="width:54px">Approved</span></div>
<div class="td" style="left:1096.4px"><span class="badge blue" style="width:34px">Paid</span></div>
<div class="td" style="left:1215.2px"><svg class="eye" width="10" height="6" viewBox="0 0 10 6"><path d="M0.2 3C1.5 1 3.1 0.2 5 0.2S8.5 1 9.8 3C8.5 5 6.9 5.8 5 5.8S1.5 5 0.2 3Z" fill="#3a3a3a"/><circle cx="5" cy="3" r="1.9" fill="#f0f0f0"/><circle cx="5" cy="3.1" r="1.1" fill="#3a3a3a"/></svg><span class="dot"></span><span class="t2">Test Testing</span></div>
<div class="acts" style="left:1334.4px"><div class="ab"><svg width="9" height="9" viewBox="0 0 9 9"><path d="M2.4 6.6L7.3 1.7" stroke="#2a2a2a" stroke-width="2.3" stroke-linecap="round"/><path d="M0.5 8.5L1 6L3 8Z" fill="#2a2a2a"/></svg></div><div class="ab"><svg width="9" height="11" viewBox="0 0 9 11"><path d="M0.3 2H8.7V3.1H0.3Z M3 0.6H6V2H3Z M1.1 3.3H7.9L7.4 10.6H1.6Z" fill="#2a2a2a"/><path d="M3 4.4V9.4M4.5 4.4V9.4M6 4.4V9.4" stroke="#fff" stroke-width="0.6"/></svg></div></div>
</div>
<div class="tr odd" style="top:407.22px;height:27.06px">
<div class="cb" style="left:3px;top:8.2px"></div>
<div class="td" style="left:27.0px"><svg class="eye" width="10" height="6" viewBox="0 0 10 6"><path d="M0.2 3C1.5 1 3.1 0.2 5 0.2S8.5 1 9.8 3C8.5 5 6.9 5.8 5 5.8S1.5 5 0.2 3Z" fill="#3a3a3a"/><circle cx="5" cy="3" r="1.9" fill="#f0f0f0"/><circle cx="5" cy="3.1" r="1.1" fill="#3a3a3a"/></svg><span class="t">l4k0a43d</span></div>
<div class="td" style="left:145.8px"><svg class="pen" width="8" height="8" viewBox="0 0 8 8"><path d="M0.3 7.7L0.7 6L5.9 0.8L7.2 2.1L2 7.3Z" fill="#cfcfcf"/></svg><span class="t">$ 10.23</span></div>
<div class="td" style="left:264.6px"><svg class="pen" width="8" height="8" viewBox="0 0 8 8"><path d="M0.3 7.7L0.7 6L5.9 0.8L7.2 2.1L2 7.3Z" fill="#cfcfcf"/></svg><span class="t">$ 120.50</span></div>
<div class="td" style="left:383.0px"><span>ORD_12345XYZ</span></div>
<div class="td" style="left:502.3px"><svg class="pen" width="8" height="8" viewBox="0 0 8 8"><path d="M0.3 7.7L0.7 6L5.9 0.8L7.2 2.1L2 7.3Z" fill="#cfcfcf"/></svg><span class="t">test product</span></div>
<div class="td" style="left:621.1px"><span>01/4/2019 00:30:03</span></div>
<div class="td" style="left:739.9px"><svg class="eye" width="10" height="6" viewBox="0 0 10 6"><path d="M0.2 3C1.5 1 3.1 0.2 5 0.2S8.5 1 9.8 3C8.5 5 6.9 5.8 5 5.8S1.5 5 0.2 3Z" fill="#3a3a3a"/><circle cx="5" cy="3" r="1.9" fill="#f0f0f0"/><circle cx="5" cy="3.1" r="1.1" fill="#3a3a3a"/></svg><span class="t">First campaign</span></div>
<div class="td" style="left:858.7px"><span class="badge dark" style="width:32.3px">Sale</span></div>
<div class="td" style="left:977.6px"><svg class="pen" width="8" height="8" viewBox="0 0 8 8"><path d="M0.3 7.7L0.7 6L5.9 0.8L7.2 2.1L2 7.3Z" fill="#cfcfcf"/></svg><span class="badge green bs" style="width:54px">Approved</span></div>
<div class="td" style="left:1096.4px"><span class="badge dark" style="width:45px">Unpaid</span></div>
<div class="td" style="left:1215.2px"><svg class="eye" width="10" height="6" viewBox="0 0 10 6"><path d="M0.2 3C1.5 1 3.1 0.2 5 0.2S8.5 1 9.8 3C8.5 5 6.9 5.8 5 5.8S1.5 5 0.2 3Z" fill="#3a3a3a"/><circle cx="5" cy="3" r="1.9" fill="#f0f0f0"/><circle cx="5" cy="3.1" r="1.1" fill="#3a3a3a"/></svg><span class="dot"></span><span class="t2">Test Testing</span></div>
<div class="acts" style="left:1334.4px"><div class="ab"><svg width="9" height="9" viewBox="0 0 9 9"><path d="M2.4 6.6L7.3 1.7" stroke="#2a2a2a" stroke-width="2.3" stroke-linecap="round"/><path d="M0.5 8.5L1 6L3 8Z" fill="#2a2a2a"/></svg></div><div class="ab"><svg width="9" height="11" viewBox="0 0 9 11"><path d="M0.3 2H8.7V3.1H0.3Z M3 0.6H6V2H3Z M1.1 3.3H7.9L7.4 10.6H1.6Z" fill="#2a2a2a"/><path d="M3 4.4V9.4M4.5 4.4V9.4M6 4.4V9.4" stroke="#fff" stroke-width="0.6"/></svg></div></div>
</div>
<div class="tr" style="top:434.28px;height:27.06px">
<div class="cb" style="left:3px;top:8.2px"></div>
<div class="td" style="left:27.0px"><svg class="eye" width="10" height="6" viewBox="0 0 10 6"><path d="M0.2 3C1.5 1 3.1 0.2 5 0.2S8.5 1 9.8 3C8.5 5 6.9 5.8 5 5.8S1.5 5 0.2 3Z" fill="#3a3a3a"/><circle cx="5" cy="3" r="1.9" fill="#f0f0f0"/><circle cx="5" cy="3.1" r="1.1" fill="#3a3a3a"/></svg><span class="t">zku46mgy</span></div>
<div class="td" style="left:145.8px"><svg class="pen" width="8" height="8" viewBox="0 0 8 8"><path d="M0.3 7.7L0.7 6L5.9 0.8L7.2 2.1L2 7.3Z" fill="#cfcfcf"/></svg><span class="t">$ 36.15</span></div>
<div class="td" style="left:264.6px"><svg class="pen" width="8" height="8" viewBox="0 0 8 8"><path d="M0.3 7.7L0.7 6L5.9 0.8L7.2 2.1L2 7.3Z" fill="#cfcfcf"/></svg><span class="t">$ 120.50</span></div>
<div class="td" style="left:383.0px"><span>ORD_12345XYZ</span></div>
<div class="td" style="left:502.3px"><svg class="pen" width="8" height="8" viewBox="0 0 8 8"><path d="M0.3 7.7L0.7 6L5.9 0.8L7.2 2.1L2 7.3Z" fill="#cfcfcf"/></svg><span class="t">test product</span></div>
<div class="td" style="left:621.1px"><span>01/4/2019 00:30:03</span></div>
<div class="td" style="left:739.9px"><svg class="eye" width="10" height="6" viewBox="0 0 10 6"><path d="M0.2 3C1.5 1 3.1 0.2 5 0.2S8.5 1 9.8 3C8.5 5 6.9 5.8 5 5.8S1.5 5 0.2 3Z" fill="#3a3a3a"/><circle cx="5" cy="3" r="1.9" fill="#f0f0f0"/><circle cx="5" cy="3.1" r="1.1" fill="#3a3a3a"/></svg><span class="t">First campaign</span></div>
<div class="td" style="left:858.7px"><span class="badge dark" style="width:32.3px">Sale</span></div>
<div class="td" style="left:977.6px"><svg class="pen" width="8" height="8" viewBox="0 0 8 8"><path d="M0.3 7.7L0.7 6L5.9 0.8L7.2 2.1L2 7.3Z" fill="#cfcfcf"/></svg><span class="badge green bs" style="width:54px">Approved</span></div>
<div class="td" style="left:1096.4px"><span class="badge dark" style="width:45px">Unpaid</span></div>
<div class="td" style="left:1215.2px"><svg class="eye" width="10" height="6" viewBox="0 0 10 6"><path d="M0.2 3C1.5 1 3.1 0.2 5 0.2S8.5 1 9.8 3C8.5 5 6.9 5.8 5 5.8S1.5 5 0.2 3Z" fill="#3a3a3a"/><circle cx="5" cy="3" r="1.9" fill="#f0f0f0"/><circle cx="5" cy="3.1" r="1.1" fill="#3a3a3a"/></svg><span class="dot"></span><span class="t2">Test Testing</span></div>
<div class="acts" style="left:1334.4px"><div class="ab"><svg width="9" height="9" viewBox="0 0 9 9"><path d="M2.4 6.6L7.3 1.7" stroke="#2a2a2a" stroke-width="2.3" stroke-linecap="round"/><path d="M0.5 8.5L1 6L3 8Z" fill="#2a2a2a"/></svg></div><div class="ab"><svg width="9" height="11" viewBox="0 0 9 11"><path d="M0.3 2H8.7V3.1H0.3Z M3 0.6H6V2H3Z M1.1 3.3H7.9L7.4 10.6H1.6Z" fill="#2a2a2a"/><path d="M3 4.4V9.4M4.5 4.4V9.4M6 4.4V9.4" stroke="#fff" stroke-width="0.6"/></svg></div></div>
</div>
<div class="tr odd" style="top:461.34px;height:27.06px">
<div class="cb" style="left:3px;top:8.2px"></div>
<div class="td" style="left:27.0px"><svg class="eye" width="10" height="6" viewBox="0 0 10 6"><path d="M0.2 3C1.5 1 3.1 0.2 5 0.2S8.5 1 9.8 3C8.5 5 6.9 5.8 5 5.8S1.5 5 0.2 3Z" fill="#3a3a3a"/><circle cx="5" cy="3" r="1.9" fill="#f0f0f0"/><circle cx="5" cy="3.1" r="1.1" fill="#3a3a3a"/></svg><span class="t">1yl6guti</span></div>
<div class="td" style="left:145.8px"><svg class="pen" width="8" height="8" viewBox="0 0 8 8"><path d="M0.3 7.7L0.7 6L5.9 0.8L7.2 2.1L2 7.3Z" fill="#cfcfcf"/></svg><span class="t">$ 10.23</span></div>
<div class="td" style="left:264.6px"><svg class="pen" width="8" height="8" viewBox="0 0 8 8"><path d="M0.3 7.7L0.7 6L5.9 0.8L7.2 2.1L2 7.3Z" fill="#cfcfcf"/></svg><span class="t">$ 120.50</span></div>
<div class="td" style="left:383.0px"><span>ORD_12345XYZ</span></div>
<div class="td" style="left:502.3px"><svg class="pen" width="8" height="8" viewBox="0 0 8 8"><path d="M0.3 7.7L0.7 6L5.9 0.8L7.2 2.1L2 7.3Z" fill="#cfcfcf"/></svg><span class="t">test product</span></div>
<div class="td" style="left:621.1px"><span>01/4/2019 00:30:02</span></div>
<div class="td" style="left:739.9px"><svg class="eye" width="10" height="6" viewBox="0 0 10 6"><path d="M0.2 3C1.5 1 3.1 0.2 5 0.2S8.5 1 9.8 3C8.5 5 6.9 5.8 5 5.8S1.5 5 0.2 3Z" fill="#3a3a3a"/><circle cx="5" cy="3" r="1.9" fill="#f0f0f0"/><circle cx="5" cy="3.1" r="1.1" fill="#3a3a3a"/></svg><span class="t">First campaign</span></div>
<div class="td" style="left:858.7px"><span class="badge dark" style="width:32.3px">Sale</span></div>
<div class="td" style="left:977.6px"><svg class="pen" width="8" height="8" viewBox="0 0 8 8"><path d="M0.3 7.7L0.7 6L5.9 0.8L7.2 2.1L2 7.3Z" fill="#cfcfcf"/></svg><span class="badge green bs" style="width:54px">Approved</span></div>
<div class="td" style="left:1096.4px"><span class="badge dark" style="width:45px">Unpaid</span></div>
<div class="td" style="left:1215.2px"><svg class="eye" width="10" height="6" viewBox="0 0 10 6"><path d="M0.2 3C1.5 1 3.1 0.2 5 0.2S8.5 1 9.8 3C8.5 5 6.9 5.8 5 5.8S1.5 5 0.2 3Z" fill="#3a3a3a"/><circle cx="5" cy="3" r="1.9" fill="#f0f0f0"/><circle cx="5" cy="3.1" r="1.1" fill="#3a3a3a"/></svg><span class="dot"></span><span class="t2">Test Testing</span></div>
<div class="acts" style="left:1334.4px"><div class="ab"><svg width="9" height="9" viewBox="0 0 9 9"><path d="M2.4 6.6L7.3 1.7" stroke="#2a2a2a" stroke-width="2.3" stroke-linecap="round"/><path d="M0.5 8.5L1 6L3 8Z" fill="#2a2a2a"/></svg></div><div class="ab"><svg width="9" height="11" viewBox="0 0 9 11"><path d="M0.3 2H8.7V3.1H0.3Z M3 0.6H6V2H3Z M1.1 3.3H7.9L7.4 10.6H1.6Z" fill="#2a2a2a"/><path d="M3 4.4V9.4M4.5 4.4V9.4M6 4.4V9.4" stroke="#fff" stroke-width="0.6"/></svg></div></div>
</div>
<div class="tr" style="top:488.40px;height:27.06px">
<div class="cb" style="left:3px;top:8.2px"></div>
<div class="td" style="left:27.0px"><svg class="eye" width="10" height="6" viewBox="0 0 10 6"><path d="M0.2 3C1.5 1 3.1 0.2 5 0.2S8.5 1 9.8 3C8.5 5 6.9 5.8 5 5.8S1.5 5 0.2 3Z" fill="#3a3a3a"/><circle cx="5" cy="3" r="1.9" fill="#f0f0f0"/><circle cx="5" cy="3.1" r="1.1" fill="#3a3a3a"/></svg><span class="t">icvf9l18</span></div>
<div class="td" style="left:145.8px"><svg class="pen" width="8" height="8" viewBox="0 0 8 8"><path d="M0.3 7.7L0.7 6L5.9 0.8L7.2 2.1L2 7.3Z" fill="#cfcfcf"/></svg><span class="t">$ 36.15</span></div>
<div class="td" style="left:264.6px"><svg class="pen" width="8" height="8" viewBox="0 0 8 8"><path d="M0.3 7.7L0.7 6L5.9 0.8L7.2 2.1L2 7.3Z" fill="#cfcfcf"/></svg><span class="t">$ 120.50</span></div>
<div class="td" style="left:383.0px"><span>ORD_12345XYZ</span></div>
<div class="td" style="left:502.3px"><svg class="pen" width="8" height="8" viewBox="0 0 8 8"><path d="M0.3 7.7L0.7 6L5.9 0.8L7.2 2.1L2 7.3Z" fill="#cfcfcf"/></svg><span class="t">test product</span></div>
<div class="td" style="left:621.1px"><span>01/4/2019 00:30:02</span></div>
<div class="td" style="left:739.9px"><svg class="eye" width="10" height="6" viewBox="0 0 10 6"><path d="M0.2 3C1.5 1 3.1 0.2 5 0.2S8.5 1 9.8 3C8.5 5 6.9 5.8 5 5.8S1.5 5 0.2 3Z" fill="#3a3a3a"/><circle cx="5" cy="3" r="1.9" fill="#f0f0f0"/><circle cx="5" cy="3.1" r="1.1" fill="#3a3a3a"/></svg><span class="t">First campaign</span></div>
<div class="td" style="left:858.7px"><span class="badge dark" style="width:32.3px">Sale</span></div>
<div class="td" style="left:977.6px"><svg class="pen" width="8" height="8" viewBox="0 0 8 8"><path d="M0.3 7.7L0.7 6L5.9 0.8L7.2 2.1L2 7.3Z" fill="#cfcfcf"/></svg><span class="badge green bs" style="width:54px">Approved</span></div>
<div class="td" style="left:1096.4px"><span class="badge dark" style="width:45px">Unpaid</span></div>
<div class="td" style="left:1215.2px"><svg class="eye" width="10" height="6" viewBox="0 0 10 6"><path d="M0.2 3C1.5 1 3.1 0.2 5 0.2S8.5 1 9.8 3C8.5 5 6.9 5.8 5 5.8S1.5 5 0.2 3Z" fill="#3a3a3a"/><circle cx="5" cy="3" r="1.9" fill="#f0f0f0"/><circle cx="5" cy="3.1" r="1.1" fill="#3a3a3a"/></svg><span class="dot"></span><span class="t2">Test Testing</span></div>
<div class="acts" style="left:1334.4px"><div class="ab"><svg width="9" height="9" viewBox="0 0 9 9"><path d="M2.4 6.6L7.3 1.7" stroke="#2a2a2a" stroke-width="2.3" stroke-linecap="round"/><path d="M0.5 8.5L1 6L3 8Z" fill="#2a2a2a"/></svg></div><div class="ab"><svg width="9" height="11" viewBox="0 0 9 11"><path d="M0.3 2H8.7V3.1H0.3Z M3 0.6H6V2H3Z M1.1 3.3H7.9L7.4 10.6H1.6Z" fill="#2a2a2a"/><path d="M3 4.4V9.4M4.5 4.4V9.4M6 4.4V9.4" stroke="#fff" stroke-width="0.6"/></svg></div></div>
</div>
<div class="tr odd" style="top:515.46px;height:27.06px">
<div class="cb" style="left:3px;top:8.2px"></div>
<div class="td" style="left:27.0px"><svg class="eye" width="10" height="6" viewBox="0 0 10 6"><path d="M0.2 3C1.5 1 3.1 0.2 5 0.2S8.5 1 9.8 3C8.5 5 6.9 5.8 5 5.8S1.5 5 0.2 3Z" fill="#3a3a3a"/><circle cx="5" cy="3" r="1.9" fill="#f0f0f0"/><circle cx="5" cy="3.1" r="1.1" fill="#3a3a3a"/></svg><span class="t">m5e82n3e</span></div>
<div class="td" style="left:145.8px"><svg class="pen" width="8" height="8" viewBox="0 0 8 8"><path d="M0.3 7.7L0.7 6L5.9 0.8L7.2 2.1L2 7.3Z" fill="#cfcfcf"/></svg><span class="t">$ 10.23</span></div>
<div class="td" style="left:264.6px"><svg class="pen" width="8" height="8" viewBox="0 0 8 8"><path d="M0.3 7.7L0.7 6L5.9 0.8L7.2 2.1L2 7.3Z" fill="#cfcfcf"/></svg><span class="t">$ 120.50</span></div>
<div class="td" style="left:383.0px"><span>ORD_12345XYZ</span></div>
<div class="td" style="left:502.3px"><svg class="pen" width="8" height="8" viewBox="0 0 8 8"><path d="M0.3 7.7L0.7 6L5.9 0.8L7.2 2.1L2 7.3Z" fill="#cfcfcf"/></svg><span class="t">test product</span></div>
<div class="td" style="left:621.1px"><span>01/4/2019 00:30:02</span></div>
<div class="td" style="left:739.9px"><svg class="eye" width="10" height="6" viewBox="0 0 10 6"><path d="M0.2 3C1.5 1 3.1 0.2 5 0.2S8.5 1 9.8 3C8.5 5 6.9 5.8 5 5.8S1.5 5 0.2 3Z" fill="#3a3a3a"/><circle cx="5" cy="3" r="1.9" fill="#f0f0f0"/><circle cx="5" cy="3.1" r="1.1" fill="#3a3a3a"/></svg><span class="t">First campaign</span></div>
<div class="td" style="left:858.7px"><span class="badge dark" style="width:32.3px">Sale</span></div>
<div class="td" style="left:977.6px"><svg class="pen" width="8" height="8" viewBox="0 0 8 8"><path d="M0.3 7.7L0.7 6L5.9 0.8L7.2 2.1L2 7.3Z" fill="#cfcfcf"/></svg><span class="badge green bs" style="width:54px">Approved</span></div>
<div class="td" style="left:1096.4px"><span class="badge dark" style="width:45px">Unpaid</span></div>
<div class="td" style="left:1215.2px"><svg class="eye" width="10" height="6" viewBox="0 0 10 6"><path d="M0.2 3C1.5 1 3.1 0.2 5 0.2S8.5 1 9.8 3C8.5 5 6.9 5.8 5 5.8S1.5 5 0.2 3Z" fill="#3a3a3a"/><circle cx="5" cy="3" r="1.9" fill="#f0f0f0"/><circle cx="5" cy="3.1" r="1.1" fill="#3a3a3a"/></svg><span class="dot"></span><span class="t2">Test Testing</span></div>
<div class="acts" style="left:1334.4px"><div class="ab"><svg width="9" height="9" viewBox="0 0 9 9"><path d="M2.4 6.6L7.3 1.7" stroke="#2a2a2a" stroke-width="2.3" stroke-linecap="round"/><path d="M0.5 8.5L1 6L3 8Z" fill="#2a2a2a"/></svg></div><div class="ab"><svg width="9" height="11" viewBox="0 0 9 11"><path d="M0.3 2H8.7V3.1H0.3Z M3 0.6H6V2H3Z M1.1 3.3H7.9L7.4 10.6H1.6Z" fill="#2a2a2a"/><path d="M3 4.4V9.4M4.5 4.4V9.4M6 4.4V9.4" stroke="#fff" stroke-width="0.6"/></svg></div></div>
</div>
<div class="tr" style="top:542.52px;height:27.06px">
<div class="cb" style="left:3px;top:8.2px"></div>
<div class="td" style="left:27.0px"><svg class="eye" width="10" height="6" viewBox="0 0 10 6"><path d="M0.2 3C1.5 1 3.1 0.2 5 0.2S8.5 1 9.8 3C8.5 5 6.9 5.8 5 5.8S1.5 5 0.2 3Z" fill="#3a3a3a"/><circle cx="5" cy="3" r="1.9" fill="#f0f0f0"/><circle cx="5" cy="3.1" r="1.1" fill="#3a3a3a"/></svg><span class="t">vc2w2cgm</span></div>
<div class="td" style="left:145.8px"><svg class="pen" width="8" height="8" viewBox="0 0 8 8"><path d="M0.3 7.7L0.7 6L5.9 0.8L7.2 2.1L2 7.3Z" fill="#cfcfcf"/></svg><span class="t">$ 36.15</span></div>
<div class="td" style="left:264.6px"><svg class="pen" width="8" height="8" viewBox="0 0 8 8"><path d="M0.3 7.7L0.7 6L5.9 0.8L7.2 2.1L2 7.3Z" fill="#cfcfcf"/></svg><span class="t">$ 120.50</span></div>
<div class="td" style="left:383.0px"><span>ORD_12345XYZ</span></div>
<div class="td" style="left:502.3px"><svg class="pen" width="8" height="8" viewBox="0 0 8 8"><path d="M0.3 7.7L0.7 6L5.9 0.8L7.2 2.1L2 7.3Z" fill="#cfcfcf"/></svg><span class="t">test product</span></div>
<div class="td" style="left:621.1px"><span>01/4/2019 00:30:02</span></div>
<div class="td" style="left:739.9px"><svg class="eye" width="10" height="6" viewBox="0 0 10 6"><path d="M0.2 3C1.5 1 3.1 0.2 5 0.2S8.5 1 9.8 3C8.5 5 6.9 5.8 5 5.8S1.5 5 0.2 3Z" fill="#3a3a3a"/><circle cx="5" cy="3" r="1.9" fill="#f0f0f0"/><circle cx="5" cy="3.1" r="1.1" fill="#3a3a3a"/></svg><span class="t">First campaign</span></div>
<div class="td" style="left:858.7px"><span class="badge dark" style="width:32.3px">Sale</span></div>
<div class="td" style="left:977.6px"><svg class="pen" width="8" height="8" viewBox="0 0 8 8"><path d="M0.3 7.7L0.7 6L5.9 0.8L7.2 2.1L2 7.3Z" fill="#cfcfcf"/></svg><span class="badge green bs" style="width:54px">Approved</span></div>
<div class="td" style="left:1096.4px"><span class="badge dark" style="width:45px">Unpaid</span></div>
<div class="td" style="left:1215.2px"><svg class="eye" width="10" height="6" viewBox="0 0 10 6"><path d="M0.2 3C1.5 1 3.1 0.2 5 0.2S8.5 1 9.8 3C8.5 5 6.9 5.8 5 5.8S1.5 5 0.2 3Z" fill="#3a3a3a"/><circle cx="5" cy="3" r="1.9" fill="#f0f0f0"/><circle cx="5" cy="3.1" r="1.1" fill="#3a3a3a"/></svg><span class="dot"></span><span class="t2">Test Testing</span></div>
<div class="acts" style="left:1334.4px"><div class="ab"><svg width="9" height="9" viewBox="0 0 9 9"><path d="M2.4 6.6L7.3 1.7" stroke="#2a2a2a" stroke-width="2.3" stroke-linecap="round"/><path d="M0.5 8.5L1 6L3 8Z" fill="#2a2a2a"/></svg></div><div class="ab"><svg width="9" height="11" viewBox="0 0 9 11"><path d="M0.3 2H8.7V3.1H0.3Z M3 0.6H6V2H3Z M1.1 3.3H7.9L7.4 10.6H1.6Z" fill="#2a2a2a"/><path d="M3 4.4V9.4M4.5 4.4V9.4M6 4.4V9.4" stroke="#fff" stroke-width="0.6"/></svg></div></div>
</div>
<div class="tr odd" style="top:569.58px;height:27.06px">
<div class="cb" style="left:3px;top:8.2px"></div>
<div class="td" style="left:27.0px"><svg class="eye" width="10" height="6" viewBox="0 0 10 6"><path d="M0.2 3C1.5 1 3.1 0.2 5 0.2S8.5 1 9.8 3C8.5 5 6.9 5.8 5 5.8S1.5 5 0.2 3Z" fill="#3a3a3a"/><circle cx="5" cy="3" r="1.9" fill="#f0f0f0"/><circle cx="5" cy="3.1" r="1.1" fill="#3a3a3a"/></svg><span class="t">26idi1ve</span></div>
<div class="td" style="left:145.8px"><svg class="pen" width="8" height="8" viewBox="0 0 8 8"><path d="M0.3 7.7L0.7 6L5.9 0.8L7.2 2.1L2 7.3Z" fill="#cfcfcf"/></svg><span class="t">$ 36.15</span></div>
<div class="td" style="left:264.6px"><svg class="pen" width="8" height="8" viewBox="0 0 8 8"><path d="M0.3 7.7L0.7 6L5.9 0.8L7.2 2.1L2 7.3Z" fill="#cfcfcf"/></svg><span class="t">$ 120.50</span></div>
<div class="td" style="left:383.0px"><span>ORD_12345XYZ</span></div>
<div class="td" style="left:502.3px"><svg class="pen" width="8" height="8" viewBox="0 0 8 8"><path d="M0.3 7.7L0.7 6L5.9 0.8L7.2 2.1L2 7.3Z" fill="#cfcfcf"/></svg><span class="t">test product</span></div>
<div class="td" style="left:621.1px"><span>01/4/2019 00:30:01</span></div>
<div class="td" style="left:739.9px"><svg class="eye" width="10" height="6" viewBox="0 0 10 6"><path d="M0.2 3C1.5 1 3.1 0.2 5 0.2S8.5 1 9.8 3C8.5 5 6.9 5.8 5 5.8S1.5 5 0.2 3Z" fill="#3a3a3a"/><circle cx="5" cy="3" r="1.9" fill="#f0f0f0"/><circle cx="5" cy="3.1" r="1.1" fill="#3a3a3a"/></svg><span class="t">First campaign</span></div>
<div class="td" style="left:858.7px"><span class="badge dark" style="width:32.3px">Sale</span></div>
<div class="td" style="left:977.6px"><svg class="pen" width="8" height="8" viewBox="0 0 8 8"><path d="M0.3 7.7L0.7 6L5.9 0.8L7.2 2.1L2 7.3Z" fill="#cfcfcf"/></svg><span class="badge green bs" style="width:54px">Approved</span></div>
<div class="td" style="left:1096.4px"><span class="badge dark" style="width:45px">Unpaid</span></div>
<div class="td" style="left:1215.2px"><svg class="eye" width="10" height="6" viewBox="0 0 10 6"><path d="M0.2 3C1.5 1 3.1 0.2 5 0.2S8.5 1 9.8 3C8.5 5 6.9 5.8 5 5.8S1.5 5 0.2 3Z" fill="#3a3a3a"/><circle cx="5" cy="3" r="1.9" fill="#f0f0f0"/><circle cx="5" cy="3.1" r="1.1" fill="#3a3a3a"/></svg><span class="dot"></span><span class="t2">Test Testing</span></div>
<div class="acts" style="left:1334.4px"><div class="ab"><svg width="9" height="9" viewBox="0 0 9 9"><path d="M2.4 6.6L7.3 1.7" stroke="#2a2a2a" stroke-width="2.3" stroke-linecap="round"/><path d="M0.5 8.5L1 6L3 8Z" fill="#2a2a2a"/></svg></div><div class="ab"><svg width="9" height="11" viewBox="0 0 9 11"><path d="M0.3 2H8.7V3.1H0.3Z M3 0.6H6V2H3Z M1.1 3.3H7.9L7.4 10.6H1.6Z" fill="#2a2a2a"/><path d="M3 4.4V9.4M4.5 4.4V9.4M6 4.4V9.4" stroke="#fff" stroke-width="0.6"/></svg></div></div>
</div>
<div class="tr" style="top:596.64px;height:27.06px">
<div class="cb" style="left:3px;top:8.2px"></div>
<div class="td" style="left:27.0px"><svg class="eye" width="10" height="6" viewBox="0 0 10 6"><path d="M0.2 3C1.5 1 3.1 0.2 5 0.2S8.5 1 9.8 3C8.5 5 6.9 5.8 5 5.8S1.5 5 0.2 3Z" fill="#3a3a3a"/><circle cx="5" cy="3" r="1.9" fill="#f0f0f0"/><circle cx="5" cy="3.1" r="1.1" fill="#3a3a3a"/></svg><span class="t">kot405gu</span></div>
<div class="td" style="left:145.8px"><svg class="pen" width="8" height="8" viewBox="0 0 8 8"><path d="M0.3 7.7L0.7 6L5.9 0.8L7.2 2.1L2 7.3Z" fill="#cfcfcf"/></svg><span class="t">$ 10.23</span></div>
<div class="td" style="left:264.6px"><svg class="pen" width="8" height="8" viewBox="0 0 8 8"><path d="M0.3 7.7L0.7 6L5.9 0.8L7.2 2.1L2 7.3Z" fill="#cfcfcf"/></svg><span class="t">$ 120.50</span></div>
<div class="td" style="left:383.0px"><span>ORD_12345XYZ</span></div>
<div class="td" style="left:502.3px"><svg class="pen" width="8" height="8" viewBox="0 0 8 8"><path d="M0.3 7.7L0.7 6L5.9 0.8L7.2 2.1L2 7.3Z" fill="#cfcfcf"/></svg><span class="t">test product</span></div>
<div class="td" style="left:621.1px"><span>01/4/2019 00:30:01</span></div>
<div class="td" style="left:739.9px"><svg class="eye" width="10" height="6" viewBox="0 0 10 6"><path d="M0.2 3C1.5 1 3.1 0.2 5 0.2S8.5 1 9.8 3C8.5 5 6.9 5.8 5 5.8S1.5 5 0.2 3Z" fill="#3a3a3a"/><circle cx="5" cy="3" r="1.9" fill="#f0f0f0"/><circle cx="5" cy="3.1" r="1.1" fill="#3a3a3a"/></svg><span class="t">First campaign</span></div>
<div class="td" style="left:858.7px"><span class="badge dark" style="width:32.3px">Sale</span></div>
<div class="td" style="left:977.6px"><svg class="pen" width="8" height="8" viewBox="0 0 8 8"><path d="M0.3 7.7L0.7 6L5.9 0.8L7.2 2.1L2 7.3Z" fill="#cfcfcf"/></svg><span class="badge green bs" style="width:54px">Approved</span></div>
<div class="td" style="left:1096.4px"><span class="badge dark" style="width:45px">Unpaid</span></div>
<div class="td" style="left:1215.2px"><svg class="eye" width="10" height="6" viewBox="0 0 10 6"><path d="M0.2 3C1.5 1 3.1 0.2 5 0.2S8.5 1 9.8 3C8.5 5 6.9 5.8 5 5.8S1.5 5 0.2 3Z" fill="#3a3a3a"/><circle cx="5" cy="3" r="1.9" fill="#f0f0f0"/><circle cx="5" cy="3.1" r="1.1" fill="#3a3a3a"/></svg><span class="dot"></span><span class="t2">Test Testing</span></div>
<div class="acts" style="left:1334.4px"><div class="ab"><svg width="9" height="9" viewBox="0 0 9 9"><path d="M2.4 6.6L7.3 1.7" stroke="#2a2a2a" stroke-width="2.3" stroke-linecap="round"/><path d="M0.5 8.5L1 6L3 8Z" fill="#2a2a2a"/></svg></div><div class="ab"><svg width="9" height="11" viewBox="0 0 9 11"><path d="M0.3 2H8.7V3.1H0.3Z M3 0.6H6V2H3Z M1.1 3.3H7.9L7.4 10.6H1.6Z" fill="#2a2a2a"/><path d="M3 4.4V9.4M4.5 4.4V9.4M6 4.4V9.4" stroke="#fff" stroke-width="0.6"/></svg></div></div>
</div>
<div class="tr odd" style="top:623.70px;height:27.06px">
<div class="cb" style="left:3px;top:8.2px"></div>
<div class="td" style="left:27.0px"><svg class="eye" width="10" height="6" viewBox="0 0 10 6"><path d="M0.2 3C1.5 1 3.1 0.2 5 0.2S8.5 1 9.8 3C8.5 5 6.9 5.8 5 5.8S1.5 5 0.2 3Z" fill="#3a3a3a"/><circle cx="5" cy="3" r="1.9" fill="#f0f0f0"/><circle cx="5" cy="3.1" r="1.1" fill="#3a3a3a"/></svg><span class="t">11snn2d4</span></div>
<div class="td" style="left:145.8px"><svg class="pen" width="8" height="8" viewBox="0 0 8 8"><path d="M0.3 7.7L0.7 6L5.9 0.8L7.2 2.1L2 7.3Z" fill="#cfcfcf"/></svg><span class="t">$ 36.15</span></div>
<div class="td" style="left:264.6px"><svg class="pen" width="8" height="8" viewBox="0 0 8 8"><path d="M0.3 7.7L0.7 6L5.9 0.8L7.2 2.1L2 7.3Z" fill="#cfcfcf"/></svg><span class="t">$ 120.50</span></div>
<div class="td" style="left:383.0px"><span>ORD_12345XYZ</span></div>
<div class="td" style="left:502.3px"><svg class="pen" width="8" height="8" viewBox="0 0 8 8"><path d="M0.3 7.7L0.7 6L5.9 0.8L7.2 2.1L2 7.3Z" fill="#cfcfcf"/></svg><span class="t">test product</span></div>
<div class="td" style="left:621.1px"><span>01/4/2019 00:29:06</span></div>
<div class="td" style="left:739.9px"><svg class="eye" width="10" height="6" viewBox="0 0 10 6"><path d="M0.2 3C1.5 1 3.1 0.2 5 0.2S8.5 1 9.8 3C8.5 5 6.9 5.8 5 5.8S1.5 5 0.2 3Z" fill="#3a3a3a"/><circle cx="5" cy="3" r="1.9" fill="#f0f0f0"/><circle cx="5" cy="3.1" r="1.1" fill="#3a3a3a"/></svg><span class="t">First campaign</span></div>
<div class="td" style="left:858.7px"><span class="badge dark" style="width:32.3px">Sale</span></div>
<div class="td" style="left:977.6px"><svg class="pen" width="8" height="8" viewBox="0 0 8 8"><path d="M0.3 7.7L0.7 6L5.9 0.8L7.2 2.1L2 7.3Z" fill="#cfcfcf"/></svg><span class="badge green bs" style="width:54px">Approved</span></div>
<div class="td" style="left:1096.4px"><span class="badge dark" style="width:45px">Unpaid</span></div>
<div class="td" style="left:1215.2px"><svg class="eye" width="10" height="6" viewBox="0 0 10 6"><path d="M0.2 3C1.5 1 3.1 0.2 5 0.2S8.5 1 9.8 3C8.5 5 6.9 5.8 5 5.8S1.5 5 0.2 3Z" fill="#3a3a3a"/><circle cx="5" cy="3" r="1.9" fill="#f0f0f0"/><circle cx="5" cy="3.1" r="1.1" fill="#3a3a3a"/></svg><span class="dot"></span><span class="t2">Test Testing</span></div>
<div class="acts" style="left:1334.4px"><div class="ab"><svg width="9" height="9" viewBox="0 0 9 9"><path d="M2.4 6.6L7.3 1.7" stroke="#2a2a2a" stroke-width="2.3" stroke-linecap="round"/><path d="M0.5 8.5L1 6L3 8Z" fill="#2a2a2a"/></svg></div><div class="ab"><svg width="9" height="11" viewBox="0 0 9 11"><path d="M0.3 2H8.7V3.1H0.3Z M3 0.6H6V2H3Z M1.1 3.3H7.9L7.4 10.6H1.6Z" fill="#2a2a2a"/><path d="M3 4.4V9.4M4.5 4.4V9.4M6 4.4V9.4" stroke="#fff" stroke-width="0.6"/></svg></div></div>
</div>
<div class="tr" style="top:650.76px;height:27.06px">
<div class="cb" style="left:3px;top:8.2px"></div>
<div class="td" style="left:27.0px"><svg class="eye" width="10" height="6" viewBox="0 0 10 6"><path d="M0.2 3C1.5 1 3.1 0.2 5 0.2S8.5 1 9.8 3C8.5 5 6.9 5.8 5 5.8S1.5 5 0.2 3Z" fill="#3a3a3a"/><circle cx="5" cy="3" r="1.9" fill="#f0f0f0"/><circle cx="5" cy="3.1" r="1.1" fill="#3a3a3a"/></svg><span class="t">l6ewz961</span></div>
<div class="td" style="left:145.8px"><svg class="pen" width="8" height="8" viewBox="0 0 8 8"><path d="M0.3 7.7L0.7 6L5.9 0.8L7.2 2.1L2 7.3Z" fill="#cfcfcf"/></svg><span class="t">$ 10.23</span></div>
<div class="td" style="left:264.6px"><svg class="pen" width="8" height="8" viewBox="0 0 8 8"><path d="M0.3 7.7L0.7 6L5.9 0.8L7.2 2.1L2 7.3Z" fill="#cfcfcf"/></svg><span class="t">$ 120.50</span></div>
<div class="td" style="left:383.0px"><span>ORD_12345XYZ</span></div>
<div class="td" style="left:502.3px"><svg class="pen" width="8" height="8" viewBox="0 0 8 8"><path d="M0.3 7.7L0.7 6L5.9 0.8L7.2 2.1L2 7.3Z" fill="#cfcfcf"/></svg><span class="t">test product</span></div>
<div class="td" style="left:621.1px"><span>01/4/2019 00:29:06</span></div>
<div class="td" style="left:739.9px"><svg class="eye" width="10" height="6" viewBox="0 0 10 6"><path d="M0.2 3C1.5 1 3.1 0.2 5 0.2S8.5 1 9.8 3C8.5 5 6.9 5.8 5 5.8S1.5 5 0.2 3Z" fill="#3a3a3a"/><circle cx="5" cy="3" r="1.9" fill="#f0f0f0"/><circle cx="5" cy="3.1" r="1.1" fill="#3a3a3a"/></svg><span class="t">First campaign</span></div>
<div class="td" style="left:858.7px"><span class="badge dark" style="width:32.3px">Sale</span></div>
<div class="td" style="left:977.6px"><svg class="pen" width="8" height="8" viewBox="0 0 8 8"><path d="M0.3 7.7L0.7 6L5.9 0.8L7.2 2.1L2 7.3Z" fill="#cfcfcf"/></svg><span class="badge blue2 bs" style="width:48px">Pending</span></div>
<div class="td" style="left:1096.4px"><span class="badge dark" style="width:45px">Unpaid</span></div>
<div class="td" style="left:1215.2px"><svg class="eye" width="10" height="6" viewBox="0 0 10 6"><path d="M0.2 3C1.5 1 3.1 0.2 5 0.2S8.5 1 9.8 3C8.5 5 6.9 5.8 5 5.8S1.5 5 0.2 3Z" fill="#3a3a3a"/><circle cx="5" cy="3" r="1.9" fill="#f0f0f0"/><circle cx="5" cy="3.1" r="1.1" fill="#3a3a3a"/></svg><span class="dot"></span><span class="t2">Test Testing</span></div>
<div class="acts" style="left:1334.4px"><div class="ab"><svg width="9" height="9" viewBox="0 0 9 9"><path d="M2.4 6.6L7.3 1.7" stroke="#2a2a2a" stroke-width="2.3" stroke-linecap="round"/><path d="M0.5 8.5L1 6L3 8Z" fill="#2a2a2a"/></svg></div><div class="ab"><svg width="9" height="11" viewBox="0 0 9 11"><path d="M0.3 2H8.7V3.1H0.3Z M3 0.6H6V2H3Z M1.1 3.3H7.9L7.4 10.6H1.6Z" fill="#2a2a2a"/><path d="M3 4.4V9.4M4.5 4.4V9.4M6 4.4V9.4" stroke="#fff" stroke-width="0.6"/></svg></div></div>
</div>
<div class="tr odd" style="top:677.82px;height:27.06px">
<div class="cb" style="left:3px;top:8.2px"></div>
<div class="td" style="left:27.0px"><svg class="eye" width="10" height="6" viewBox="0 0 10 6"><path d="M0.2 3C1.5 1 3.1 0.2 5 0.2S8.5 1 9.8 3C8.5 5 6.9 5.8 5 5.8S1.5 5 0.2 3Z" fill="#3a3a3a"/><circle cx="5" cy="3" r="1.9" fill="#f0f0f0"/><circle cx="5" cy="3.1" r="1.1" fill="#3a3a3a"/></svg><span class="t">69zn42u6</span></div>
<div class="td" style="left:145.8px"><svg class="pen" width="8" height="8" viewBox="0 0 8 8"><path d="M0.3 7.7L0.7 6L5.9 0.8L7.2 2.1L2 7.3Z" fill="#cfcfcf"/></svg><span class="t">$ 10.23</span></div>
<div class="td" style="left:264.6px"><svg class="pen" width="8" height="8" viewBox="0 0 8 8"><path d="M0.3 7.7L0.7 6L5.9 0.8L7.2 2.1L2 7.3Z" fill="#cfcfcf"/></svg><span class="t">$ 120.50</span></div>
<div class="td" style="left:383.0px"><span>ORD_12345XYZ</span></div>
<div class="td" style="left:502.3px"><svg class="pen" width="8" height="8" viewBox="0 0 8 8"><path d="M0.3 7.7L0.7 6L5.9 0.8L7.2 2.1L2 7.3Z" fill="#cfcfcf"/></svg><span class="t">test product</span></div>
<div class="td" style="left:621.1px"><span>01/4/2019 00:29:05</span></div>
<div class="td" style="left:739.9px"><svg class="eye" width="10" height="6" viewBox="0 0 10 6"><path d="M0.2 3C1.5 1 3.1 0.2 5 0.2S8.5 1 9.8 3C8.5 5 6.9 5.8 5 5.8S1.5 5 0.2 3Z" fill="#3a3a3a"/><circle cx="5" cy="3" r="1.9" fill="#f0f0f0"/><circle cx="5" cy="3.1" r="1.1" fill="#3a3a3a"/></svg><span class="t">First campaign</span></div>
<div class="td" style="left:858.7px"><span class="badge dark" style="width:32.3px">Sale</span></div>
<div class="td" style="left:977.6px"><svg class="pen" width="8" height="8" viewBox="0 0 8 8"><path d="M0.3 7.7L0.7 6L5.9 0.8L7.2 2.1L2 7.3Z" fill="#cfcfcf"/></svg><span class="badge blue2 bs" style="width:48px">Pending</span></div>
<div class="td" style="left:1096.4px"><span class="badge dark" style="width:45px">Unpaid</span></div>
<div class="td" style="left:1215.2px"><svg class="eye" width="10" height="6" viewBox="0 0 10 6"><path d="M0.2 3C1.5 1 3.1 0.2 5 0.2S8.5 1 9.8 3C8.5 5 6.9 5.8 5 5.8S1.5 5 0.2 3Z" fill="#3a3a3a"/><circle cx="5" cy="3" r="1.9" fill="#f0f0f0"/><circle cx="5" cy="3.1" r="1.1" fill="#3a3a3a"/></svg><span class="dot"></span><span class="t2">Test Testing</span></div>
<div class="acts" style="left:1334.4px"><div class="ab"><svg width="9" height="9" viewBox="0 0 9 9"><path d="M2.4 6.6L7.3 1.7" stroke="#2a2a2a" stroke-width="2.3" stroke-linecap="round"/><path d="M0.5 8.5L1 6L3 8Z" fill="#2a2a2a"/></svg></div><div class="ab"><svg width="9" height="11" viewBox="0 0 9 11"><path d="M0.3 2H8.7V3.1H0.3Z M3 0.6H6V2H3Z M1.1 3.3H7.9L7.4 10.6H1.6Z" fill="#2a2a2a"/><path d="M3 4.4V9.4M4.5 4.4V9.4M6 4.4V9.4" stroke="#fff" stroke-width="0.6"/></svg></div></div>
</div>
<div class="tr" style="top:704.88px;height:27.06px">
<div class="cb" style="left:3px;top:8.2px"></div>
<div class="td" style="left:27.0px"><svg class="eye" width="10" height="6" viewBox="0 0 10 6"><path d="M0.2 3C1.5 1 3.1 0.2 5 0.2S8.5 1 9.8 3C8.5 5 6.9 5.8 5 5.8S1.5 5 0.2 3Z" fill="#3a3a3a"/><circle cx="5" cy="3" r="1.9" fill="#f0f0f0"/><circle cx="5" cy="3.1" r="1.1" fill="#3a3a3a"/></svg><span class="t">qklbsdua</span></div>
<div class="td" style="left:145.8px"><svg class="pen" width="8" height="8" viewBox="0 0 8 8"><path d="M0.3 7.7L0.7 6L5.9 0.8L7.2 2.1L2 7.3Z" fill="#cfcfcf"/></svg><span class="t">$ 36.15</span></div>
<div class="td" style="left:264.6px"><svg class="pen" width="8" height="8" viewBox="0 0 8 8"><path d="M0.3 7.7L0.7 6L5.9 0.8L7.2 2.1L2 7.3Z" fill="#cfcfcf"/></svg><span class="t">$ 120.50</span></div>
<div class="td" style="left:383.0px"><span>ORD_12345XYZ</span></div>
<div class="td" style="left:502.3px"><svg class="pen" width="8" height="8" viewBox="0 0 8 8"><path d="M0.3 7.7L0.7 6L5.9 0.8L7.2 2.1L2 7.3Z" fill="#cfcfcf"/></svg><span class="t">test product</span></div>
<div class="td" style="left:621.1px"><span>01/4/2019 00:29:05</span></div>
<div class="td" style="left:739.9px"><svg class="eye" width="10" height="6" viewBox="0 0 10 6"><path d="M0.2 3C1.5 1 3.1 0.2 5 0.2S8.5 1 9.8 3C8.5 5 6.9 5.8 5 5.8S1.5 5 0.2 3Z" fill="#3a3a3a"/><circle cx="5" cy="3" r="1.9" fill="#f0f0f0"/><circle cx="5" cy="3.1" r="1.1" fill="#3a3a3a"/></svg><span class="t">First campaign</span></div>
<div class="td" style="left:858.7px"><span class="badge dark" style="width:32.3px">Sale</span></div>
<div class="td" style="left:977.6px"><svg class="pen" width="8" height="8" viewBox="0 0 8 8"><path d="M0.3 7.7L0.7 6L5.9 0.8L7.2 2.1L2 7.3Z" fill="#cfcfcf"/></svg><span class="badge blue2 bs" style="width:48px">Pending</span></div>
<div class="td" style="left:1096.4px"><span class="badge dark" style="width:45px">Unpaid</span></div>
<div class="td" style="left:1215.2px"><svg class="eye" width="10" height="6" viewBox="0 0 10 6"><path d="M0.2 3C1.5 1 3.1 0.2 5 0.2S8.5 1 9.8 3C8.5 5 6.9 5.8 5 5.8S1.5 5 0.2 3Z" fill="#3a3a3a"/><circle cx="5" cy="3" r="1.9" fill="#f0f0f0"/><circle cx="5" cy="3.1" r="1.1" fill="#3a3a3a"/></svg><span class="dot"></span><span class="t2">Test Testing</span></div>
<div class="acts" style="left:1334.4px"><div class="ab"><svg width="9" height="9" viewBox="0 0 9 9"><path d="M2.4 6.6L7.3 1.7" stroke="#2a2a2a" stroke-width="2.3" stroke-linecap="round"/><path d="M0.5 8.5L1 6L3 8Z" fill="#2a2a2a"/></svg></div><div class="ab"><svg width="9" height="11" viewBox="0 0 9 11"><path d="M0.3 2H8.7V3.1H0.3Z M3 0.6H6V2H3Z M1.1 3.3H7.9L7.4 10.6H1.6Z" fill="#2a2a2a"/><path d="M3 4.4V9.4M4.5 4.4V9.4M6 4.4V9.4" stroke="#fff" stroke-width="0.6"/></svg></div></div>
</div>
<div class="tr odd" style="top:731.94px;height:27.06px">
<div class="cb" style="left:3px;top:8.2px"></div>
<div class="td" style="left:27.0px"><svg class="eye" width="10" height="6" viewBox="0 0 10 6"><path d="M0.2 3C1.5 1 3.1 0.2 5 0.2S8.5 1 9.8 3C8.5 5 6.9 5.8 5 5.8S1.5 5 0.2 3Z" fill="#3a3a3a"/><circle cx="5" cy="3" r="1.9" fill="#f0f0f0"/><circle cx="5" cy="3.1" r="1.1" fill="#3a3a3a"/></svg><span class="t">bmamcgm6</span></div>
<div class="td" style="left:145.8px"><svg class="pen" width="8" height="8" viewBox="0 0 8 8"><path d="M0.3 7.7L0.7 6L5.9 0.8L7.2 2.1L2 7.3Z" fill="#cfcfcf"/></svg><span class="t">$ 36.15</span></div>
<div class="td" style="left:264.6px"><svg class="pen" width="8" height="8" viewBox="0 0 8 8"><path d="M0.3 7.7L0.7 6L5.9 0.8L7.2 2.1L2 7.3Z" fill="#cfcfcf"/></svg><span class="t">$ 120.50</span></div>
<div class="td" style="left:383.0px"><span>ORD_12345XYZ</span></div>
<div class="td" style="left:502.3px"><svg class="pen" width="8" height="8" viewBox="0 0 8 8"><path d="M0.3 7.7L0.7 6L5.9 0.8L7.2 2.1L2 7.3Z" fill="#cfcfcf"/></svg><span class="t">test product</span></div>
<div class="td" style="left:621.1px"><span>01/4/2019 00:29:01</span></div>
<div class="td" style="left:739.9px"><svg class="eye" width="10" height="6" viewBox="0 0 10 6"><path d="M0.2 3C1.5 1 3.1 0.2 5 0.2S8.5 1 9.8 3C8.5 5 6.9 5.8 5 5.8S1.5 5 0.2 3Z" fill="#3a3a3a"/><circle cx="5" cy="3" r="1.9" fill="#f0f0f0"/><circle cx="5" cy="3.1" r="1.1" fill="#3a3a3a"/></svg><span class="t">First campaign</span></div>
<div class="td" style="left:858.7px"><span class="badge dark" style="width:32.3px">Sale</span></div>
<div class="td" style="left:977.6px"><svg class="pen" width="8" height="8" viewBox="0 0 8 8"><path d="M0.3 7.7L0.7 6L5.9 0.8L7.2 2.1L2 7.3Z" fill="#cfcfcf"/></svg><span class="badge blue2 bs" style="width:48px">Pending</span></div>
<div class="td" style="left:1096.4px"><span class="badge dark" style="width:45px">Unpaid</span></div>
<div class="td" style="left:1215.2px"><svg class="eye" width="10" height="6" viewBox="0 0 10 6"><path d="M0.2 3C1.5 1 3.1 0.2 5 0.2S8.5 1 9.8 3C8.5 5 6.9 5.8 5 5.8S1.5 5 0.2 3Z" fill="#3a3a3a"/><circle cx="5" cy="3" r="1.9" fill="#f0f0f0"/><circle cx="5" cy="3.1" r="1.1" fill="#3a3a3a"/></svg><span class="dot"></span><span class="t2">Test Testing</span></div>
<div class="acts" style="left:1334.4px"><div class="ab"><svg width="9" height="9" viewBox="0 0 9 9"><path d="M2.4 6.6L7.3 1.7" stroke="#2a2a2a" stroke-width="2.3" stroke-linecap="round"/><path d="M0.5 8.5L1 6L3 8Z" fill="#2a2a2a"/></svg></div><div class="ab"><svg width="9" height="11" viewBox="0 0 9 11"><path d="M0.3 2H8.7V3.1H0.3Z M3 0.6H6V2H3Z M1.1 3.3H7.9L7.4 10.6H1.6Z" fill="#2a2a2a"/><path d="M3 4.4V9.4M4.5 4.4V9.4M6 4.4V9.4" stroke="#fff" stroke-width="0.6"/></svg></div></div>
</div>
<div class="tr" style="top:759.00px;height:27.06px">
<div class="cb" style="left:3px;top:8.2px"></div>
<div class="td" style="left:27.0px"><svg class="eye" width="10" height="6" viewBox="0 0 10 6"><path d="M0.2 3C1.5 1 3.1 0.2 5 0.2S8.5 1 9.8 3C8.5 5 6.9 5.8 5 5.8S1.5 5 0.2 3Z" fill="#3a3a3a"/><circle cx="5" cy="3" r="1.9" fill="#f0f0f0"/><circle cx="5" cy="3.1" r="1.1" fill="#3a3a3a"/></svg><span class="t">mep4zf24</span></div>
<div class="td" style="left:145.8px"><svg class="pen" width="8" height="8" viewBox="0 0 8 8"><path d="M0.3 7.7L0.7 6L5.9 0.8L7.2 2.1L2 7.3Z" fill="#cfcfcf"/></svg><span class="t">$ 10.23</span></div>
<div class="td" style="left:264.6px"><svg class="pen" width="8" height="8" viewBox="0 0 8 8"><path d="M0.3 7.7L0.7 6L5.9 0.8L7.2 2.1L2 7.3Z" fill="#cfcfcf"/></svg><span class="t">$ 120.50</span></div>
<div class="td" style="left:383.0px"><span>ORD_12345XYZ</span></div>
<div class="td" style="left:502.3px"><svg class="pen" width="8" height="8" viewBox="0 0 8 8"><path d="M0.3 7.7L0.7 6L5.9 0.8L7.2 2.1L2 7.3Z" fill="#cfcfcf"/></svg><span class="t">test product</span></div>
<div class="td" style="left:621.1px"><span>01/4/2019 00:29:01</span></div>
<div class="td" style="left:739.9px"><svg class="eye" width="10" height="6" viewBox="0 0 10 6"><path d="M0.2 3C1.5 1 3.1 0.2 5 0.2S8.5 1 9.8 3C8.5 5 6.9 5.8 5 5.8S1.5 5 0.2 3Z" fill="#3a3a3a"/><circle cx="5" cy="3" r="1.9" fill="#f0f0f0"/><circle cx="5" cy="3.1" r="1.1" fill="#3a3a3a"/></svg><span class="t">First campaign</span></div>
<div class="td" style="left:858.7px"><span class="badge dark" style="width:32.3px">Sale</span></div>
<div class="td" style="left:977.6px"><svg class="pen" width="8" height="8" viewBox="0 0 8 8"><path d="M0.3 7.7L0.7 6L5.9 0.8L7.2 2.1L2 7.3Z" fill="#cfcfcf"/></svg><span class="badge blue2 bs" style="width:48px">Pending</span></div>
<div class="td" style="left:1096.4px"><span class="badge blue" style="width:34px">Paid</span></div>
<div class="td" style="left:1215.2px"><svg class="eye" width="10" height="6" viewBox="0 0 10 6"><path d="M0.2 3C1.5 1 3.1 0.2 5 0.2S8.5 1 9.8 3C8.5 5 6.9 5.8 5 5.8S1.5 5 0.2 3Z" fill="#3a3a3a"/><circle cx="5" cy="3" r="1.9" fill="#f0f0f0"/><circle cx="5" cy="3.1" r="1.1" fill="#3a3a3a"/></svg><span class="dot"></span><span class="t2">Test Testing</span></div>
<div class="acts" style="left:1334.4px"><div class="ab"><svg width="9" height="9" viewBox="0 0 9 9"><path d="M2.4 6.6L7.3 1.7" stroke="#2a2a2a" stroke-width="2.3" stroke-linecap="round"/><path d="M0.5 8.5L1 6L3 8Z" fill="#2a2a2a"/></svg></div><div class="ab"><svg width="9" height="11" viewBox="0 0 9 11"><path d="M0.3 2H8.7V3.1H0.3Z M3 0.6H6V2H3Z M1.1 3.3H7.9L7.4 10.6H1.6Z" fill="#2a2a2a"/><path d="M3 4.4V9.4M4.5 4.4V9.4M6 4.4V9.4" stroke="#fff" stroke-width="0.6"/></svg></div></div>
</div>
<div class="tr odd" style="top:786.06px;height:27.06px">
<div class="cb" style="left:3px;top:8.2px"></div>
<div class="td" style="left:27.0px"><svg class="eye" width="10" height="6" viewBox="0 0 10 6"><path d="M0.2 3C1.5 1 3.1 0.2 5 0.2S8.5 1 9.8 3C8.5 5 6.9 5.8 5 5.8S1.5 5 0.2 3Z" fill="#3a3a3a"/><circle cx="5" cy="3" r="1.9" fill="#f0f0f0"/><circle cx="5" cy="3.1" r="1.1" fill="#3a3a3a"/></svg><span class="t">sul52620</span></div>
<div class="td" style="left:145.8px"><svg class="pen" width="8" height="8" viewBox="0 0 8 8"><path d="M0.3 7.7L0.7 6L5.9 0.8L7.2 2.1L2 7.3Z" fill="#cfcfcf"/></svg><span class="t">$ 30.00</span></div>
<div class="td" style="left:264.6px"><svg class="pen" width="8" height="8" viewBox="0 0 8 8"><path d="M0.3 7.7L0.7 6L5.9 0.8L7.2 2.1L2 7.3Z" fill="#cfcfcf"/></svg><span class="t">$ 100.00</span></div>
<div class="td" style="left:383.0px"><span>order1</span></div>
<div class="td" style="left:502.3px"><svg class="pen" width="8" height="8" viewBox="0 0 8 8"><path d="M0.3 7.7L0.7 6L5.9 0.8L7.2 2.1L2 7.3Z" fill="#cfcfcf"/></svg></div>
<div class="td" style="left:621.1px"><span>09/20/2018 04:43:07</span></div>
<div class="td" style="left:739.9px"><svg class="eye" width="10" height="6" viewBox="0 0 10 6"><path d="M0.2 3C1.5 1 3.1 0.2 5 0.2S8.5 1 9.8 3C8.5 5 6.9 5.8 5 5.8S1.5 5 0.2 3Z" fill="#3a3a3a"/><circle cx="5" cy="3" r="1.9" fill="#f0f0f0"/><circle cx="5" cy="3.1" r="1.1" fill="#3a3a3a"/></svg><span class="t">First campaign</span></div>
<div class="td" style="left:858.7px"><span class="badge dark" style="width:32.3px">Sale</span></div>
<div class="td" style="left:977.6px"><svg class="pen" width="8" height="8" viewBox="0 0 8 8"><path d="M0.3 7.7L0.7 6L5.9 0.8L7.2 2.1L2 7.3Z" fill="#cfcfcf"/></svg><span class="badge blue2 bs" style="width:48px">Pending</span></div>
<div class="td" style="left:1096.4px"><span class="badge blue" style="width:34px">Paid</span></div>
<div class="td" style="left:1215.2px"><svg class="eye" width="10" height="6" viewBox="0 0 10 6"><path d="M0.2 3C1.5 1 3.1 0.2 5 0.2S8.5 1 9.8 3C8.5 5 6.9 5.8 5 5.8S1.5 5 0.2 3Z" fill="#3a3a3a"/><circle cx="5" cy="3" r="1.9" fill="#f0f0f0"/><circle cx="5" cy="3.1" r="1.1" fill="#3a3a3a"/></svg><span class="dot"></span><span class="t2">Test Testing</span></div>
<div class="acts" style="left:1334.4px"><div class="ab"><svg width="9" height="9" viewBox="0 0 9 9"><path d="M2.4 6.6L7.3 1.7" stroke="#2a2a2a" stroke-width="2.3" stroke-linecap="round"/><path d="M0.5 8.5L1 6L3 8Z" fill="#2a2a2a"/></svg></div><div class="ab"><svg width="9" height="11" viewBox="0 0 9 11"><path d="M0.3 2H8.7V3.1H0.3Z M3 0.6H6V2H3Z M1.1 3.3H7.9L7.4 10.6H1.6Z" fill="#2a2a2a"/><path d="M3 4.4V9.4M4.5 4.4V9.4M6 4.4V9.4" stroke="#fff" stroke-width="0.6"/></svg></div></div>
</div>
<div class="tr" style="top:813.12px;height:26.88px">
<div class="cb" style="left:3px;top:8.2px"></div>
<div class="td" style="left:27.0px"><svg class="eye" width="10" height="6" viewBox="0 0 10 6"><path d="M0.2 3C1.5 1 3.1 0.2 5 0.2S8.5 1 9.8 3C8.5 5 6.9 5.8 5 5.8S1.5 5 0.2 3Z" fill="#3a3a3a"/><circle cx="5" cy="3" r="1.9" fill="#f0f0f0"/><circle cx="5" cy="3.1" r="1.1" fill="#3a3a3a"/></svg><span class="t">zqk1decx</span></div>
<div class="td" style="left:145.8px"><svg class="pen" width="8" height="8" viewBox="0 0 8 8"><path d="M0.3 7.7L0.7 6L5.9 0.8L7.2 2.1L2 7.3Z" fill="#cfcfcf"/></svg><span class="t">$ 10.00</span></div>
<div class="td" style="left:264.6px"><svg class="pen" width="8" height="8" viewBox="0 0 8 8"><path d="M0.3 7.7L0.7 6L5.9 0.8L7.2 2.1L2 7.3Z" fill="#cfcfcf"/></svg><span class="t">$ 100.00</span></div>
<div class="td" style="left:383.0px"><span>order2</span></div>
<div class="td" style="left:502.3px"><svg class="pen" width="8" height="8" viewBox="0 0 8 8"><path d="M0.3 7.7L0.7 6L5.9 0.8L7.2 2.1L2 7.3Z" fill="#cfcfcf"/></svg></div>
<div class="td" style="left:621.1px"><span>09/20/2018 04:43:07</span></div>
<div class="td" style="left:739.9px"><svg class="eye" width="10" height="6" viewBox="0 0 10 6"><path d="M0.2 3C1.5 1 3.1 0.2 5 0.2S8.5 1 9.8 3C8.5 5 6.9 5.8 5 5.8S1.5 5 0.2 3Z" fill="#3a3a3a"/><circle cx="5" cy="3" r="1.9" fill="#f0f0f0"/><circle cx="5" cy="3.1" r="1.1" fill="#3a3a3a"/></svg><span class="t">First campaign</span></div>
<div class="td" style="left:858.7px"><span class="badge dark" style="width:59px">2 - tier Sale</span></div>
<div class="td" style="left:977.6px"><svg class="pen" width="8" height="8" viewBox="0 0 8 8"><path d="M0.3 7.7L0.7 6L5.9 0.8L7.2 2.1L2 7.3Z" fill="#cfcfcf"/></svg><span class="badge blue2 bs" style="width:48px">Pending</span></div>
<div class="td" style="left:1096.4px"><span class="badge blue" style="width:34px">Paid</span></div>
<div class="td" style="left:1215.2px"><svg class="eye" width="10" height="6" viewBox="0 0 10 6"><path d="M0.2 3C1.5 1 3.1 0.2 5 0.2S8.5 1 9.8 3C8.5 5 6.9 5.8 5 5.8S1.5 5 0.2 3Z" fill="#3a3a3a"/><circle cx="5" cy="3" r="1.9" fill="#f0f0f0"/><circle cx="5" cy="3.1" r="1.1" fill="#3a3a3a"/></svg><span class="dot"></span><span class="t2">Test Testing</span></div>
<div class="acts" style="left:1334.4px"><div class="ab"><svg width="9" height="9" viewBox="0 0 9 9"><path d="M2.4 6.6L7.3 1.7" stroke="#2a2a2a" stroke-width="2.3" stroke-linecap="round"/><path d="M0.5 8.5L1 6L3 8Z" fill="#2a2a2a"/></svg></div><div class="ab"><svg width="9" height="11" viewBox="0 0 9 11"><path d="M0.3 2H8.7V3.1H0.3Z M3 0.6H6V2H3Z M1.1 3.3H7.9L7.4 10.6H1.6Z" fill="#2a2a2a"/><path d="M3 4.4V9.4M4.5 4.4V9.4M6 4.4V9.4" stroke="#fff" stroke-width="0.6"/></svg></div></div>
</div>

<div id="foot"><span style="left:3.5px">23</span><span style="left:146.5px">$ 1257.44</span><span style="left:265px">$ 12698.50</span></div>

</body></html>
